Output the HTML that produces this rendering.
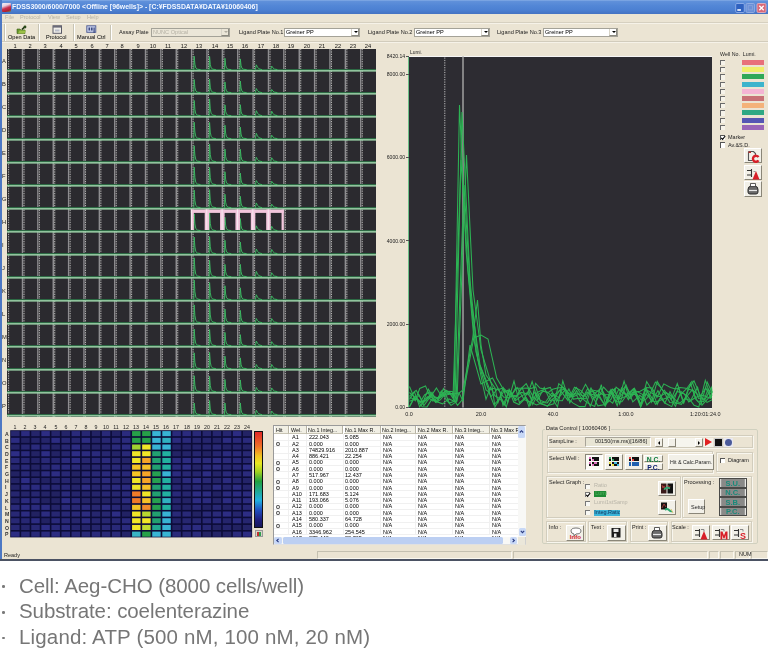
<!DOCTYPE html><html><head><meta charset="utf-8"><style>
html,body{margin:0;padding:0;}
body{width:768px;height:657px;overflow:hidden;position:relative;background:#fff;font-family:"Liberation Sans", sans-serif;}
.t{position:absolute;white-space:pre;line-height:1;font-family:"Liberation Sans", sans-serif;will-change:transform;}
div{box-sizing:border-box;}
</style></head><body>
<div style="position:absolute;left:0px;top:0px;width:768px;height:561px;background:#ebe4d3;"></div>
<div style="position:absolute;left:0px;top:0px;width:768px;height:13.5px;background:linear-gradient(#86ade6 0px,#5f90da 1.5px,#5286d6 6px,#4c80d2 10px,#4574c4 13.5px);"></div>
<div style="position:absolute;left:0px;top:0px;width:2px;height:561px;background:#4d78c4;"></div>
<div style="position:absolute;left:0px;top:559px;width:768px;height:2px;background:#4b5263;"></div>
<div style="position:absolute;left:2px;top:3px;width:8.5px;height:8.5px;background:linear-gradient(160deg,#f0f0f8 0,#e8d0e0 30%,#c83050 55%,#b02030 80%,#50a070 100%);border-radius:1px;"></div>
<div class="t" style="left:12px;top:4.2px;font-size:6.9px;color:#f4f8ff;font-weight:bold;letter-spacing:0px;">FDSS3000/6000/7000 &lt;Offline [96wells]&gt; - [C:¥FDSSDATA¥DATA¥10060406]</div>
<svg style="position:absolute;left:735px;top:2.5px" width="32" height="10"><rect x="0.7" y="0.5" width="8.6" height="9" rx="1.2" fill="#2f62c0" stroke="#9cb8ec" stroke-width="0.8"/><rect x="2.3" y="6.2" width="3.6" height="1.6" fill="#fff"/><rect x="11" y="0.5" width="8.6" height="9" rx="1.2" fill="#6a90d8" stroke="#9cb4e4" stroke-width="0.8"/><rect x="13.2" y="2.7" width="4.2" height="4.2" fill="none" stroke="#8aa6dc" stroke-width="0.8"/><rect x="22" y="0.5" width="9" height="9" rx="1.2" fill="#d86878" stroke="#f0b8c0" stroke-width="0.8"/><path d="M24.3 2.8l4.4 4.4M28.7 2.8l-4.4 4.4" stroke="#fff" stroke-width="1.3"/></svg>
<div class="t" style="left:4.7px;top:15.2px;font-size:5.6px;color:#b8b4a4;">File</div>
<div class="t" style="left:20.3px;top:15.2px;font-size:5.6px;color:#b8b4a4;">Protocol</div>
<div class="t" style="left:48px;top:15.2px;font-size:5.6px;color:#b8b4a4;">View</div>
<div class="t" style="left:66.4px;top:15.2px;font-size:5.6px;color:#b8b4a4;">Setup</div>
<div class="t" style="left:87.2px;top:15.2px;font-size:5.6px;color:#b8b4a4;">Help</div>
<div style="position:absolute;left:2px;top:22.3px;width:766px;height:1px;background:#d6d0c0;"></div>
<div style="position:absolute;left:2px;top:23.3px;width:766px;height:1px;background:#f6f2e8;"></div>
<div style="position:absolute;left:4px;top:24px;width:1px;height:17px;background:#c8c4b4;"></div>
<div style="position:absolute;left:5px;top:24px;width:1px;height:17px;background:#ffffff;"></div>
<div style="position:absolute;left:38px;top:24px;width:1px;height:17px;background:#c8c4b4;"></div>
<div style="position:absolute;left:39px;top:24px;width:1px;height:17px;background:#ffffff;"></div>
<div style="position:absolute;left:73px;top:24px;width:1px;height:17px;background:#c8c4b4;"></div>
<div style="position:absolute;left:74px;top:24px;width:1px;height:17px;background:#ffffff;"></div>
<div style="position:absolute;left:110px;top:25px;width:1px;height:15px;background:#c8c4b4;"></div>
<div style="position:absolute;left:111px;top:25px;width:1px;height:15px;background:#ffffff;"></div>
<div class="t" style="left:8.2px;top:35.0px;font-size:5.6px;color:#000;">Open Data</div>
<div class="t" style="left:46.2px;top:35.0px;font-size:5.6px;color:#000;">Protocol</div>
<div class="t" style="left:76.5px;top:35.0px;font-size:5.6px;color:#000;">Manual Ctrl</div>
<svg style="position:absolute;left:16px;top:24.5px" width="11" height="9"><path d="M1 4h3l1 1h4v3.5h-8z" fill="#6a9a30" stroke="#3a5a18" stroke-width=".6"/><path d="M2 8.5l1.5-3h6.5l-1.5 3z" fill="#9cc048"/><path d="M6 4.5l3-3" stroke="#1a3010" stroke-width="1.6"/><circle cx="9" cy="2" r="1.4" fill="#2a4a18"/></svg>
<svg style="position:absolute;left:51.5px;top:24.5px" width="11" height="9"><rect x="1" y="0.8" width="8.5" height="7.5" fill="#f0eee8" stroke="#5a5a68" stroke-width="1"/><rect x="1" y="0.8" width="8.5" height="1.8" fill="#6a6a78"/><rect x="3" y="4.5" width="4.5" height="2" fill="#b8bcc8"/></svg>
<svg style="position:absolute;left:85.5px;top:24.5px" width="11" height="9"><rect x="0.8" y="0.8" width="9" height="6.5" fill="#c8d0ec" stroke="#4a5890" stroke-width=".9"/><path d="M2.5 2.5h1.6v3h-1.6zM5 2.5h1.6v3h-1.6zM7.5 2.5h1.2v5.5h-1.2z" fill="#3a4880"/></svg>
<div style="position:absolute;left:2px;top:41.2px;width:766px;height:1px;background:#d2ccbc;"></div>
<div style="position:absolute;left:2px;top:42.2px;width:766px;height:1px;background:#f6f2e8;"></div>
<div class="t" style="left:119px;top:30.4px;font-size:5.6px;color:#222;">Assay Plate</div>
<div style="position:absolute;left:151px;top:28px;width:79px;height:9px;background:#ebe6d8;border:1px solid #a4a298;"></div>
<div class="t" style="left:153px;top:30.4px;font-size:5.6px;color:#b4b0a4;">NUNC Optical</div>
<div style="position:absolute;left:221px;top:29px;width:8px;height:7px;background:#ebe6d8;border-left:1px solid #d8d4c8;border-bottom:1px solid #8c8a80;border-right:1px solid #8c8a80;"><div style="position:absolute;left:2px;top:2.2px;width:0;height:0;border-left:2px solid transparent;border-right:2px solid transparent;border-top:2.4px solid #b0aca0"></div></div>
<div class="t" style="left:238.7px;top:30.4px;font-size:5.6px;color:#222;">Ligand Plate No.1</div>
<div style="position:absolute;left:283.7px;top:28px;width:76px;height:9px;background:#fff;border:1px solid #a4a298;"></div>
<div class="t" style="left:285.7px;top:30.4px;font-size:5.6px;color:#000;">Greiner PP</div>
<div style="position:absolute;left:350.7px;top:29px;width:8px;height:7px;background:#fff;border-left:1px solid #d8d4c8;border-bottom:1px solid #8c8a80;border-right:1px solid #8c8a80;"><div style="position:absolute;left:2px;top:2.2px;width:0;height:0;border-left:2px solid transparent;border-right:2px solid transparent;border-top:2.4px solid #000"></div></div>
<div class="t" style="left:368px;top:30.4px;font-size:5.6px;color:#222;">Ligand Plate No.2</div>
<div style="position:absolute;left:413.7px;top:28px;width:76px;height:9px;background:#fff;border:1px solid #a4a298;"></div>
<div class="t" style="left:415.7px;top:30.4px;font-size:5.6px;color:#000;">Greiner PP</div>
<div style="position:absolute;left:480.7px;top:29px;width:8px;height:7px;background:#fff;border-left:1px solid #d8d4c8;border-bottom:1px solid #8c8a80;border-right:1px solid #8c8a80;"><div style="position:absolute;left:2px;top:2.2px;width:0;height:0;border-left:2px solid transparent;border-right:2px solid transparent;border-top:2.4px solid #000"></div></div>
<div class="t" style="left:497.3px;top:30.4px;font-size:5.6px;color:#222;">Ligand Plate No.3</div>
<div style="position:absolute;left:542.8px;top:28px;width:75px;height:9px;background:#fff;border:1px solid #a4a298;"></div>
<div class="t" style="left:544.8px;top:30.4px;font-size:5.6px;color:#000;">Greiner PP</div>
<div style="position:absolute;left:608.8px;top:29px;width:8px;height:7px;background:#fff;border-left:1px solid #d8d4c8;border-bottom:1px solid #8c8a80;border-right:1px solid #8c8a80;"><div style="position:absolute;left:2px;top:2.2px;width:0;height:0;border-left:2px solid transparent;border-right:2px solid transparent;border-top:2.4px solid #000"></div></div>
<div class="t" style="left:8.6875px;top:43.6px;font-size:5.7px;color:#111;"><span style="display:inline-block;width:12px;text-align:center">1</span></div>
<div class="t" style="left:24.0625px;top:43.6px;font-size:5.7px;color:#111;"><span style="display:inline-block;width:12px;text-align:center">2</span></div>
<div class="t" style="left:39.4375px;top:43.6px;font-size:5.7px;color:#111;"><span style="display:inline-block;width:12px;text-align:center">3</span></div>
<div class="t" style="left:54.8125px;top:43.6px;font-size:5.7px;color:#111;"><span style="display:inline-block;width:12px;text-align:center">4</span></div>
<div class="t" style="left:70.1875px;top:43.6px;font-size:5.7px;color:#111;"><span style="display:inline-block;width:12px;text-align:center">5</span></div>
<div class="t" style="left:85.5625px;top:43.6px;font-size:5.7px;color:#111;"><span style="display:inline-block;width:12px;text-align:center">6</span></div>
<div class="t" style="left:100.9375px;top:43.6px;font-size:5.7px;color:#111;"><span style="display:inline-block;width:12px;text-align:center">7</span></div>
<div class="t" style="left:116.3125px;top:43.6px;font-size:5.7px;color:#111;"><span style="display:inline-block;width:12px;text-align:center">8</span></div>
<div class="t" style="left:131.6875px;top:43.6px;font-size:5.7px;color:#111;"><span style="display:inline-block;width:12px;text-align:center">9</span></div>
<div class="t" style="left:147.0625px;top:43.6px;font-size:5.7px;color:#111;"><span style="display:inline-block;width:12px;text-align:center">10</span></div>
<div class="t" style="left:162.4375px;top:43.6px;font-size:5.7px;color:#111;"><span style="display:inline-block;width:12px;text-align:center">11</span></div>
<div class="t" style="left:177.8125px;top:43.6px;font-size:5.7px;color:#111;"><span style="display:inline-block;width:12px;text-align:center">12</span></div>
<div class="t" style="left:193.1875px;top:43.6px;font-size:5.7px;color:#111;"><span style="display:inline-block;width:12px;text-align:center">13</span></div>
<div class="t" style="left:208.5625px;top:43.6px;font-size:5.7px;color:#111;"><span style="display:inline-block;width:12px;text-align:center">14</span></div>
<div class="t" style="left:223.9375px;top:43.6px;font-size:5.7px;color:#111;"><span style="display:inline-block;width:12px;text-align:center">15</span></div>
<div class="t" style="left:239.3125px;top:43.6px;font-size:5.7px;color:#111;"><span style="display:inline-block;width:12px;text-align:center">16</span></div>
<div class="t" style="left:254.6875px;top:43.6px;font-size:5.7px;color:#111;"><span style="display:inline-block;width:12px;text-align:center">17</span></div>
<div class="t" style="left:270.0625px;top:43.6px;font-size:5.7px;color:#111;"><span style="display:inline-block;width:12px;text-align:center">18</span></div>
<div class="t" style="left:285.4375px;top:43.6px;font-size:5.7px;color:#111;"><span style="display:inline-block;width:12px;text-align:center">19</span></div>
<div class="t" style="left:300.8125px;top:43.6px;font-size:5.7px;color:#111;"><span style="display:inline-block;width:12px;text-align:center">20</span></div>
<div class="t" style="left:316.1875px;top:43.6px;font-size:5.7px;color:#111;"><span style="display:inline-block;width:12px;text-align:center">21</span></div>
<div class="t" style="left:331.5625px;top:43.6px;font-size:5.7px;color:#111;"><span style="display:inline-block;width:12px;text-align:center">22</span></div>
<div class="t" style="left:346.9375px;top:43.6px;font-size:5.7px;color:#111;"><span style="display:inline-block;width:12px;text-align:center">23</span></div>
<div class="t" style="left:362.3125px;top:43.6px;font-size:5.7px;color:#111;"><span style="display:inline-block;width:12px;text-align:center">24</span></div>
<div class="t" style="left:2.4px;top:59.0px;font-size:5.8px;color:#222;">A</div>
<div class="t" style="left:2.4px;top:82.0px;font-size:5.8px;color:#222;">B</div>
<div class="t" style="left:2.4px;top:105.0px;font-size:5.8px;color:#222;">C</div>
<div class="t" style="left:2.4px;top:128.0px;font-size:5.8px;color:#222;">D</div>
<div class="t" style="left:2.4px;top:151.0px;font-size:5.8px;color:#222;">E</div>
<div class="t" style="left:2.4px;top:174.0px;font-size:5.8px;color:#222;">F</div>
<div class="t" style="left:2.4px;top:197.0px;font-size:5.8px;color:#222;">G</div>
<div class="t" style="left:2.4px;top:220.0px;font-size:5.8px;color:#222;">H</div>
<div class="t" style="left:2.4px;top:243.0px;font-size:5.8px;color:#222;">I</div>
<div class="t" style="left:2.4px;top:266.0px;font-size:5.8px;color:#222;">J</div>
<div class="t" style="left:2.4px;top:289.0px;font-size:5.8px;color:#222;">K</div>
<div class="t" style="left:2.4px;top:312.0px;font-size:5.8px;color:#222;">L</div>
<div class="t" style="left:2.4px;top:335.0px;font-size:5.8px;color:#222;">M</div>
<div class="t" style="left:2.4px;top:358.0px;font-size:5.8px;color:#222;">N</div>
<div class="t" style="left:2.4px;top:381.0px;font-size:5.8px;color:#222;">O</div>
<div class="t" style="left:2.4px;top:404.0px;font-size:5.8px;color:#222;">P</div>
<div style="position:absolute;left:7.0px;top:49.0px;width:369.0px;height:368.0px;background:#2b2a2f;"></div>
<svg style="position:absolute;left:0;top:0" width="768" height="657"><rect x="21.77" y="49.0" width="1.5" height="368.0" fill="#8e8d90"/><rect x="37.15" y="49.0" width="1.5" height="368.0" fill="#8e8d90"/><rect x="52.52" y="49.0" width="1.5" height="368.0" fill="#8e8d90"/><rect x="67.90" y="49.0" width="1.5" height="368.0" fill="#8e8d90"/><rect x="83.28" y="49.0" width="1.5" height="368.0" fill="#8e8d90"/><rect x="98.65" y="49.0" width="1.5" height="368.0" fill="#8e8d90"/><rect x="114.03" y="49.0" width="1.5" height="368.0" fill="#8e8d90"/><rect x="129.40" y="49.0" width="1.5" height="368.0" fill="#8e8d90"/><rect x="144.78" y="49.0" width="1.5" height="368.0" fill="#8e8d90"/><rect x="160.15" y="49.0" width="1.5" height="368.0" fill="#8e8d90"/><rect x="175.53" y="49.0" width="1.5" height="368.0" fill="#8e8d90"/><rect x="190.90" y="49.0" width="1.5" height="368.0" fill="#8e8d90"/><rect x="206.28" y="49.0" width="1.5" height="368.0" fill="#8e8d90"/><rect x="221.65" y="49.0" width="1.5" height="368.0" fill="#8e8d90"/><rect x="237.03" y="49.0" width="1.5" height="368.0" fill="#8e8d90"/><rect x="252.40" y="49.0" width="1.5" height="368.0" fill="#8e8d90"/><rect x="267.77" y="49.0" width="1.5" height="368.0" fill="#8e8d90"/><rect x="283.15" y="49.0" width="1.5" height="368.0" fill="#8e8d90"/><rect x="298.52" y="49.0" width="1.5" height="368.0" fill="#8e8d90"/><rect x="313.90" y="49.0" width="1.5" height="368.0" fill="#8e8d90"/><rect x="329.27" y="49.0" width="1.5" height="368.0" fill="#8e8d90"/><rect x="344.65" y="49.0" width="1.5" height="368.0" fill="#8e8d90"/><rect x="360.02" y="49.0" width="1.5" height="368.0" fill="#8e8d90"/><rect x="7.90" y="49.0" width="1.4" height="368.0" fill="#3a393c"/><line x1="8.60" y1="49.0" x2="8.60" y2="417.0" stroke="#b8b8b8" stroke-width="1.0" stroke-dasharray="1.2 1.2"/><rect x="23.27" y="49.0" width="1.4" height="368.0" fill="#3a393c"/><line x1="23.98" y1="49.0" x2="23.98" y2="417.0" stroke="#b8b8b8" stroke-width="1.0" stroke-dasharray="1.2 1.2"/><rect x="38.65" y="49.0" width="1.4" height="368.0" fill="#3a393c"/><line x1="39.35" y1="49.0" x2="39.35" y2="417.0" stroke="#b8b8b8" stroke-width="1.0" stroke-dasharray="1.2 1.2"/><rect x="54.02" y="49.0" width="1.4" height="368.0" fill="#3a393c"/><line x1="54.73" y1="49.0" x2="54.73" y2="417.0" stroke="#b8b8b8" stroke-width="1.0" stroke-dasharray="1.2 1.2"/><rect x="69.40" y="49.0" width="1.4" height="368.0" fill="#3a393c"/><line x1="70.10" y1="49.0" x2="70.10" y2="417.0" stroke="#b8b8b8" stroke-width="1.0" stroke-dasharray="1.2 1.2"/><rect x="84.78" y="49.0" width="1.4" height="368.0" fill="#3a393c"/><line x1="85.47" y1="49.0" x2="85.47" y2="417.0" stroke="#b8b8b8" stroke-width="1.0" stroke-dasharray="1.2 1.2"/><rect x="100.15" y="49.0" width="1.4" height="368.0" fill="#3a393c"/><line x1="100.85" y1="49.0" x2="100.85" y2="417.0" stroke="#b8b8b8" stroke-width="1.0" stroke-dasharray="1.2 1.2"/><rect x="115.53" y="49.0" width="1.4" height="368.0" fill="#3a393c"/><line x1="116.22" y1="49.0" x2="116.22" y2="417.0" stroke="#b8b8b8" stroke-width="1.0" stroke-dasharray="1.2 1.2"/><rect x="130.90" y="49.0" width="1.4" height="368.0" fill="#3a393c"/><line x1="131.60" y1="49.0" x2="131.60" y2="417.0" stroke="#b8b8b8" stroke-width="1.0" stroke-dasharray="1.2 1.2"/><rect x="146.28" y="49.0" width="1.4" height="368.0" fill="#3a393c"/><line x1="146.97" y1="49.0" x2="146.97" y2="417.0" stroke="#b8b8b8" stroke-width="1.0" stroke-dasharray="1.2 1.2"/><rect x="161.65" y="49.0" width="1.4" height="368.0" fill="#3a393c"/><line x1="162.35" y1="49.0" x2="162.35" y2="417.0" stroke="#b8b8b8" stroke-width="1.0" stroke-dasharray="1.2 1.2"/><rect x="177.03" y="49.0" width="1.4" height="368.0" fill="#3a393c"/><line x1="177.72" y1="49.0" x2="177.72" y2="417.0" stroke="#b8b8b8" stroke-width="1.0" stroke-dasharray="1.2 1.2"/><rect x="192.40" y="49.0" width="1.4" height="368.0" fill="#3a393c"/><line x1="193.10" y1="49.0" x2="193.10" y2="417.0" stroke="#b8b8b8" stroke-width="1.0" stroke-dasharray="1.2 1.2"/><rect x="207.78" y="49.0" width="1.4" height="368.0" fill="#3a393c"/><line x1="208.47" y1="49.0" x2="208.47" y2="417.0" stroke="#b8b8b8" stroke-width="1.0" stroke-dasharray="1.2 1.2"/><rect x="223.15" y="49.0" width="1.4" height="368.0" fill="#3a393c"/><line x1="223.85" y1="49.0" x2="223.85" y2="417.0" stroke="#b8b8b8" stroke-width="1.0" stroke-dasharray="1.2 1.2"/><rect x="238.53" y="49.0" width="1.4" height="368.0" fill="#3a393c"/><line x1="239.22" y1="49.0" x2="239.22" y2="417.0" stroke="#b8b8b8" stroke-width="1.0" stroke-dasharray="1.2 1.2"/><rect x="253.90" y="49.0" width="1.4" height="368.0" fill="#3a393c"/><line x1="254.60" y1="49.0" x2="254.60" y2="417.0" stroke="#b8b8b8" stroke-width="1.0" stroke-dasharray="1.2 1.2"/><rect x="269.27" y="49.0" width="1.4" height="368.0" fill="#3a393c"/><line x1="269.98" y1="49.0" x2="269.98" y2="417.0" stroke="#b8b8b8" stroke-width="1.0" stroke-dasharray="1.2 1.2"/><rect x="284.65" y="49.0" width="1.4" height="368.0" fill="#3a393c"/><line x1="285.35" y1="49.0" x2="285.35" y2="417.0" stroke="#b8b8b8" stroke-width="1.0" stroke-dasharray="1.2 1.2"/><rect x="300.02" y="49.0" width="1.4" height="368.0" fill="#3a393c"/><line x1="300.73" y1="49.0" x2="300.73" y2="417.0" stroke="#b8b8b8" stroke-width="1.0" stroke-dasharray="1.2 1.2"/><rect x="315.40" y="49.0" width="1.4" height="368.0" fill="#3a393c"/><line x1="316.10" y1="49.0" x2="316.10" y2="417.0" stroke="#b8b8b8" stroke-width="1.0" stroke-dasharray="1.2 1.2"/><rect x="330.77" y="49.0" width="1.4" height="368.0" fill="#3a393c"/><line x1="331.48" y1="49.0" x2="331.48" y2="417.0" stroke="#b8b8b8" stroke-width="1.0" stroke-dasharray="1.2 1.2"/><rect x="346.15" y="49.0" width="1.4" height="368.0" fill="#3a393c"/><line x1="346.85" y1="49.0" x2="346.85" y2="417.0" stroke="#b8b8b8" stroke-width="1.0" stroke-dasharray="1.2 1.2"/><rect x="361.52" y="49.0" width="1.4" height="368.0" fill="#3a393c"/><line x1="362.23" y1="49.0" x2="362.23" y2="417.0" stroke="#b8b8b8" stroke-width="1.0" stroke-dasharray="1.2 1.2"/><rect x="7.0" y="69.00" width="369.0" height="1.0" fill="#2d6a44"/><rect x="7.0" y="70.10" width="369.0" height="1.5" fill="#9cd4aa"/><rect x="7.0" y="92.00" width="369.0" height="1.0" fill="#2d6a44"/><rect x="7.0" y="93.10" width="369.0" height="1.5" fill="#9cd4aa"/><rect x="7.0" y="115.00" width="369.0" height="1.0" fill="#2d6a44"/><rect x="7.0" y="116.10" width="369.0" height="1.5" fill="#9cd4aa"/><rect x="7.0" y="138.00" width="369.0" height="1.0" fill="#2d6a44"/><rect x="7.0" y="139.10" width="369.0" height="1.5" fill="#9cd4aa"/><rect x="7.0" y="161.00" width="369.0" height="1.0" fill="#2d6a44"/><rect x="7.0" y="162.10" width="369.0" height="1.5" fill="#9cd4aa"/><rect x="7.0" y="184.00" width="369.0" height="1.0" fill="#2d6a44"/><rect x="7.0" y="185.10" width="369.0" height="1.5" fill="#9cd4aa"/><rect x="7.0" y="207.00" width="369.0" height="1.0" fill="#2d6a44"/><rect x="7.0" y="208.10" width="369.0" height="1.5" fill="#9cd4aa"/><rect x="7.0" y="230.00" width="369.0" height="1.0" fill="#2d6a44"/><rect x="7.0" y="231.10" width="369.0" height="1.5" fill="#9cd4aa"/><rect x="7.0" y="253.00" width="369.0" height="1.0" fill="#2d6a44"/><rect x="7.0" y="254.10" width="369.0" height="1.5" fill="#9cd4aa"/><rect x="7.0" y="276.00" width="369.0" height="1.0" fill="#2d6a44"/><rect x="7.0" y="277.10" width="369.0" height="1.5" fill="#9cd4aa"/><rect x="7.0" y="299.00" width="369.0" height="1.0" fill="#2d6a44"/><rect x="7.0" y="300.10" width="369.0" height="1.5" fill="#9cd4aa"/><rect x="7.0" y="322.00" width="369.0" height="1.0" fill="#2d6a44"/><rect x="7.0" y="323.10" width="369.0" height="1.5" fill="#9cd4aa"/><rect x="7.0" y="345.00" width="369.0" height="1.0" fill="#2d6a44"/><rect x="7.0" y="346.10" width="369.0" height="1.5" fill="#9cd4aa"/><rect x="7.0" y="368.00" width="369.0" height="1.0" fill="#2d6a44"/><rect x="7.0" y="369.10" width="369.0" height="1.5" fill="#9cd4aa"/><rect x="7.0" y="391.00" width="369.0" height="1.0" fill="#2d6a44"/><rect x="7.0" y="392.10" width="369.0" height="1.5" fill="#9cd4aa"/><rect x="7.0" y="414.00" width="369.0" height="1.0" fill="#2d6a44"/><rect x="7.0" y="415.10" width="369.0" height="1.5" fill="#9cd4aa"/><polyline points="193.80,69.60 194.20,56.21 194.90,64.24 195.80,67.99 197.50,69.20 200.50,69.60" fill="none" stroke="#3cb862" stroke-width="0.95" stroke-linejoin="round"/><polyline points="209.18,69.60 209.57,56.42 210.28,64.33 211.18,68.02 212.88,69.20 215.88,69.60" fill="none" stroke="#3cb862" stroke-width="0.95" stroke-linejoin="round"/><polyline points="224.55,69.60 224.95,58.22 225.65,65.05 226.55,68.23 228.25,69.26 231.25,69.60" fill="none" stroke="#3cb862" stroke-width="0.95" stroke-linejoin="round"/><polyline points="239.93,69.60 240.32,58.91 241.03,65.33 241.93,68.32 243.62,69.28 246.62,69.60" fill="none" stroke="#3cb862" stroke-width="0.95" stroke-linejoin="round"/><polyline points="255.40,69.60 256.30,64.80 257.50,67.20 259.00,68.88 262.00,69.60" fill="none" stroke="#3cb862" stroke-width="0.95" stroke-linejoin="round"/><polyline points="270.77,69.60 271.68,66.05 272.88,67.83 274.38,69.07 277.38,69.60" fill="none" stroke="#3cb862" stroke-width="0.95" stroke-linejoin="round"/><polyline points="193.80,92.60 194.20,79.53 194.90,87.37 195.80,91.03 197.50,92.21 200.50,92.60" fill="none" stroke="#3cb862" stroke-width="0.95" stroke-linejoin="round"/><polyline points="209.18,92.60 209.57,78.99 210.28,87.16 211.18,90.97 212.88,92.19 215.88,92.60" fill="none" stroke="#3cb862" stroke-width="0.95" stroke-linejoin="round"/><polyline points="224.55,92.60 224.95,81.96 225.65,88.34 226.55,91.32 228.25,92.28 231.25,92.60" fill="none" stroke="#3cb862" stroke-width="0.95" stroke-linejoin="round"/><polyline points="239.93,92.60 240.32,81.00 241.03,87.96 241.93,91.21 243.62,92.25 246.62,92.60" fill="none" stroke="#3cb862" stroke-width="0.95" stroke-linejoin="round"/><polyline points="255.40,92.60 256.30,88.50 257.50,90.55 259.00,91.98 262.00,92.60" fill="none" stroke="#3cb862" stroke-width="0.95" stroke-linejoin="round"/><polyline points="270.77,92.60 271.68,89.46 272.88,91.03 274.38,92.13 277.38,92.60" fill="none" stroke="#3cb862" stroke-width="0.95" stroke-linejoin="round"/><polyline points="193.80,115.60 194.20,100.49 194.90,109.56 195.80,113.79 197.50,115.15 200.50,115.60" fill="none" stroke="#3cb862" stroke-width="0.95" stroke-linejoin="round"/><polyline points="209.18,115.60 209.57,98.89 210.28,108.92 211.18,113.59 212.88,115.10 215.88,115.60" fill="none" stroke="#3cb862" stroke-width="0.95" stroke-linejoin="round"/><polyline points="224.55,115.60 224.95,104.85 225.65,111.30 226.55,114.31 228.25,115.28 231.25,115.60" fill="none" stroke="#3cb862" stroke-width="0.95" stroke-linejoin="round"/><polyline points="239.93,115.60 240.32,104.73 241.03,111.25 241.93,114.30 243.62,115.27 246.62,115.60" fill="none" stroke="#3cb862" stroke-width="0.95" stroke-linejoin="round"/><polyline points="255.40,115.60 256.30,110.66 257.50,113.13 259.00,114.86 262.00,115.60" fill="none" stroke="#3cb862" stroke-width="0.95" stroke-linejoin="round"/><polyline points="270.77,115.60 271.68,111.18 272.88,113.39 274.38,114.94 277.38,115.60" fill="none" stroke="#3cb862" stroke-width="0.95" stroke-linejoin="round"/><polyline points="193.80,138.60 194.20,122.19 194.90,132.03 195.80,136.63 197.50,138.11 200.50,138.60" fill="none" stroke="#3cb862" stroke-width="0.95" stroke-linejoin="round"/><polyline points="209.18,138.60 209.57,122.40 210.28,132.12 211.18,136.66 212.88,138.11 215.88,138.60" fill="none" stroke="#3cb862" stroke-width="0.95" stroke-linejoin="round"/><polyline points="224.55,138.60 224.95,125.23 225.65,133.25 226.55,137.00 228.25,138.20 231.25,138.60" fill="none" stroke="#3cb862" stroke-width="0.95" stroke-linejoin="round"/><polyline points="239.93,138.60 240.32,127.14 241.03,134.02 241.93,137.23 243.62,138.26 246.62,138.60" fill="none" stroke="#3cb862" stroke-width="0.95" stroke-linejoin="round"/><polyline points="255.40,138.60 256.30,133.31 257.50,135.96 259.00,137.81 262.00,138.60" fill="none" stroke="#3cb862" stroke-width="0.95" stroke-linejoin="round"/><polyline points="270.77,138.60 271.68,135.17 272.88,136.88 274.38,138.08 277.38,138.60" fill="none" stroke="#3cb862" stroke-width="0.95" stroke-linejoin="round"/><polyline points="193.80,161.60 194.20,145.71 194.90,155.24 195.80,159.69 197.50,161.12 200.50,161.60" fill="none" stroke="#3cb862" stroke-width="0.95" stroke-linejoin="round"/><polyline points="209.18,161.60 209.57,143.98 210.28,154.55 211.18,159.49 212.88,161.07 215.88,161.60" fill="none" stroke="#3cb862" stroke-width="0.95" stroke-linejoin="round"/><polyline points="224.55,161.60 224.95,149.03 225.65,156.57 226.55,160.09 228.25,161.22 231.25,161.60" fill="none" stroke="#3cb862" stroke-width="0.95" stroke-linejoin="round"/><polyline points="239.93,161.60 240.32,149.22 241.03,156.65 241.93,160.11 243.62,161.23 246.62,161.60" fill="none" stroke="#3cb862" stroke-width="0.95" stroke-linejoin="round"/><polyline points="255.40,161.60 256.30,157.33 257.50,159.46 259.00,160.96 262.00,161.60" fill="none" stroke="#3cb862" stroke-width="0.95" stroke-linejoin="round"/><polyline points="270.77,161.60 271.68,157.73 272.88,159.66 274.38,161.02 277.38,161.60" fill="none" stroke="#3cb862" stroke-width="0.95" stroke-linejoin="round"/><polyline points="193.80,184.60 194.20,167.15 194.90,177.62 195.80,182.51 197.50,184.08 200.50,184.60" fill="none" stroke="#3cb862" stroke-width="0.95" stroke-linejoin="round"/><polyline points="209.18,184.60 209.57,167.47 210.28,177.75 211.18,182.54 212.88,184.09 215.88,184.60" fill="none" stroke="#3cb862" stroke-width="0.95" stroke-linejoin="round"/><polyline points="224.55,184.60 224.95,171.74 225.65,179.46 226.55,183.06 228.25,184.21 231.25,184.60" fill="none" stroke="#3cb862" stroke-width="0.95" stroke-linejoin="round"/><polyline points="239.93,184.60 240.32,173.12 241.03,180.01 241.93,183.22 243.62,184.26 246.62,184.60" fill="none" stroke="#3cb862" stroke-width="0.95" stroke-linejoin="round"/><polyline points="255.40,184.60 256.30,180.51 257.50,182.56 259.00,183.99 262.00,184.60" fill="none" stroke="#3cb862" stroke-width="0.95" stroke-linejoin="round"/><polyline points="270.77,184.60 271.68,181.29 272.88,182.95 274.38,184.10 277.38,184.60" fill="none" stroke="#3cb862" stroke-width="0.95" stroke-linejoin="round"/><polyline points="193.80,207.60 194.20,190.10 194.90,200.60 195.80,205.50 197.50,207.08 200.50,207.60" fill="none" stroke="#3cb862" stroke-width="0.95" stroke-linejoin="round"/><polyline points="209.18,207.60 209.57,189.61 210.28,200.40 211.18,205.44 212.88,207.06 215.88,207.60" fill="none" stroke="#3cb862" stroke-width="0.95" stroke-linejoin="round"/><polyline points="224.55,207.60 224.95,194.22 225.65,202.25 226.55,205.99 228.25,207.20 231.25,207.60" fill="none" stroke="#3cb862" stroke-width="0.95" stroke-linejoin="round"/><polyline points="239.93,207.60 240.32,196.30 241.03,203.08 241.93,206.24 243.62,207.26 246.62,207.60" fill="none" stroke="#3cb862" stroke-width="0.95" stroke-linejoin="round"/><polyline points="255.40,207.60 256.30,202.92 257.50,205.26 259.00,206.90 262.00,207.60" fill="none" stroke="#3cb862" stroke-width="0.95" stroke-linejoin="round"/><polyline points="270.77,207.60 271.68,204.15 272.88,205.88 274.38,207.08 277.38,207.60" fill="none" stroke="#3cb862" stroke-width="0.95" stroke-linejoin="round"/><polyline points="193.80,230.60 194.20,213.93 194.90,223.93 195.80,228.60 197.50,230.10 200.50,230.60" fill="none" stroke="#3cb862" stroke-width="0.95" stroke-linejoin="round"/><polyline points="209.18,230.60 209.57,212.28 210.28,223.27 211.18,228.40 212.88,230.05 215.88,230.60" fill="none" stroke="#3cb862" stroke-width="0.95" stroke-linejoin="round"/><polyline points="224.55,230.60 224.95,217.31 225.65,225.28 226.55,229.00 228.25,230.20 231.25,230.60" fill="none" stroke="#3cb862" stroke-width="0.95" stroke-linejoin="round"/><polyline points="239.93,230.60 240.32,218.51 241.03,225.76 241.93,229.15 243.62,230.24 246.62,230.60" fill="none" stroke="#3cb862" stroke-width="0.95" stroke-linejoin="round"/><polyline points="255.40,230.60 256.30,225.81 257.50,228.21 259.00,229.88 262.00,230.60" fill="none" stroke="#3cb862" stroke-width="0.95" stroke-linejoin="round"/><polyline points="270.77,230.60 271.68,226.29 272.88,228.44 274.38,229.95 277.38,230.60" fill="none" stroke="#3cb862" stroke-width="0.95" stroke-linejoin="round"/><polyline points="193.80,253.60 194.20,237.00 194.90,246.96 195.80,251.61 197.50,253.10 200.50,253.60" fill="none" stroke="#3cb862" stroke-width="0.95" stroke-linejoin="round"/><polyline points="209.18,253.60 209.57,236.57 210.28,246.79 211.18,251.56 212.88,253.09 215.88,253.60" fill="none" stroke="#3cb862" stroke-width="0.95" stroke-linejoin="round"/><polyline points="224.55,253.60 224.95,240.22 225.65,248.25 226.55,251.99 228.25,253.20 231.25,253.60" fill="none" stroke="#3cb862" stroke-width="0.95" stroke-linejoin="round"/><polyline points="239.93,253.60 240.32,242.06 241.03,248.98 241.93,252.21 243.62,253.25 246.62,253.60" fill="none" stroke="#3cb862" stroke-width="0.95" stroke-linejoin="round"/><polyline points="255.40,253.60 256.30,248.97 257.50,251.29 259.00,252.91 262.00,253.60" fill="none" stroke="#3cb862" stroke-width="0.95" stroke-linejoin="round"/><polyline points="270.77,253.60 271.68,249.46 272.88,251.53 274.38,252.98 277.38,253.60" fill="none" stroke="#3cb862" stroke-width="0.95" stroke-linejoin="round"/><polyline points="193.80,276.60 194.20,257.82 194.90,269.09 195.80,274.35 197.50,276.04 200.50,276.60" fill="none" stroke="#3cb862" stroke-width="0.95" stroke-linejoin="round"/><polyline points="209.18,276.60 209.57,260.29 210.28,270.08 211.18,274.64 212.88,276.11 215.88,276.60" fill="none" stroke="#3cb862" stroke-width="0.95" stroke-linejoin="round"/><polyline points="224.55,276.60 224.95,264.35 225.65,271.70 226.55,275.13 228.25,276.23 231.25,276.60" fill="none" stroke="#3cb862" stroke-width="0.95" stroke-linejoin="round"/><polyline points="239.93,276.60 240.32,264.40 241.03,271.72 241.93,275.14 243.62,276.23 246.62,276.60" fill="none" stroke="#3cb862" stroke-width="0.95" stroke-linejoin="round"/><polyline points="255.40,276.60 256.30,271.45 257.50,274.03 259.00,275.83 262.00,276.60" fill="none" stroke="#3cb862" stroke-width="0.95" stroke-linejoin="round"/><polyline points="270.77,276.60 271.68,272.74 272.88,274.67 274.38,276.02 277.38,276.60" fill="none" stroke="#3cb862" stroke-width="0.95" stroke-linejoin="round"/><polyline points="193.80,299.60 194.20,280.10 194.90,291.80 195.80,297.26 197.50,299.02 200.50,299.60" fill="none" stroke="#3cb862" stroke-width="0.95" stroke-linejoin="round"/><polyline points="209.18,299.60 209.57,282.54 210.28,292.78 211.18,297.55 212.88,299.09 215.88,299.60" fill="none" stroke="#3cb862" stroke-width="0.95" stroke-linejoin="round"/><polyline points="224.55,299.60 224.95,285.77 225.65,294.07 226.55,297.94 228.25,299.18 231.25,299.60" fill="none" stroke="#3cb862" stroke-width="0.95" stroke-linejoin="round"/><polyline points="239.93,299.60 240.32,287.81 241.03,294.88 241.93,298.18 243.62,299.25 246.62,299.60" fill="none" stroke="#3cb862" stroke-width="0.95" stroke-linejoin="round"/><polyline points="255.40,299.60 256.30,294.73 257.50,297.17 259.00,298.87 262.00,299.60" fill="none" stroke="#3cb862" stroke-width="0.95" stroke-linejoin="round"/><polyline points="270.77,299.60 271.68,295.92 272.88,297.76 274.38,299.05 277.38,299.60" fill="none" stroke="#3cb862" stroke-width="0.95" stroke-linejoin="round"/><polyline points="193.80,322.60 194.20,304.91 194.90,315.52 195.80,320.48 197.50,322.07 200.50,322.60" fill="none" stroke="#3cb862" stroke-width="0.95" stroke-linejoin="round"/><polyline points="209.18,322.60 209.57,303.35 210.28,314.90 211.18,320.29 212.88,322.02 215.88,322.60" fill="none" stroke="#3cb862" stroke-width="0.95" stroke-linejoin="round"/><polyline points="224.55,322.60 224.95,309.03 225.65,317.17 226.55,320.97 228.25,322.19 231.25,322.60" fill="none" stroke="#3cb862" stroke-width="0.95" stroke-linejoin="round"/><polyline points="239.93,322.60 240.32,310.40 241.03,317.72 241.93,321.14 243.62,322.23 246.62,322.60" fill="none" stroke="#3cb862" stroke-width="0.95" stroke-linejoin="round"/><polyline points="255.40,322.60 256.30,318.51 257.50,320.55 259.00,321.99 262.00,322.60" fill="none" stroke="#3cb862" stroke-width="0.95" stroke-linejoin="round"/><polyline points="270.77,322.60 271.68,318.55 272.88,320.57 274.38,321.99 277.38,322.60" fill="none" stroke="#3cb862" stroke-width="0.95" stroke-linejoin="round"/><polyline points="193.80,345.60 194.20,329.10 194.90,339.00 195.80,343.62 197.50,345.11 200.50,345.60" fill="none" stroke="#3cb862" stroke-width="0.95" stroke-linejoin="round"/><polyline points="209.18,345.60 209.57,329.49 210.28,339.16 211.18,343.67 212.88,345.12 215.88,345.60" fill="none" stroke="#3cb862" stroke-width="0.95" stroke-linejoin="round"/><polyline points="224.55,345.60 224.95,332.41 225.65,340.33 226.55,344.02 228.25,345.20 231.25,345.60" fill="none" stroke="#3cb862" stroke-width="0.95" stroke-linejoin="round"/><polyline points="239.93,345.60 240.32,334.66 241.03,341.22 241.93,344.29 243.62,345.27 246.62,345.60" fill="none" stroke="#3cb862" stroke-width="0.95" stroke-linejoin="round"/><polyline points="255.40,345.60 256.30,341.02 257.50,343.31 259.00,344.91 262.00,345.60" fill="none" stroke="#3cb862" stroke-width="0.95" stroke-linejoin="round"/><polyline points="270.77,345.60 271.68,341.60 272.88,343.60 274.38,345.00 277.38,345.60" fill="none" stroke="#3cb862" stroke-width="0.95" stroke-linejoin="round"/><polyline points="193.80,368.60 194.20,352.85 194.90,362.30 195.80,366.71 197.50,368.13 200.50,368.60" fill="none" stroke="#3cb862" stroke-width="0.95" stroke-linejoin="round"/><polyline points="209.18,368.60 209.57,352.33 210.28,362.09 211.18,366.65 212.88,368.11 215.88,368.60" fill="none" stroke="#3cb862" stroke-width="0.95" stroke-linejoin="round"/><polyline points="224.55,368.60 224.95,356.20 225.65,363.64 226.55,367.11 228.25,368.23 231.25,368.60" fill="none" stroke="#3cb862" stroke-width="0.95" stroke-linejoin="round"/><polyline points="239.93,368.60 240.32,357.86 241.03,364.30 241.93,367.31 243.62,368.28 246.62,368.60" fill="none" stroke="#3cb862" stroke-width="0.95" stroke-linejoin="round"/><polyline points="255.40,368.60 256.30,364.51 257.50,366.56 259.00,367.99 262.00,368.60" fill="none" stroke="#3cb862" stroke-width="0.95" stroke-linejoin="round"/><polyline points="270.77,368.60 271.68,364.45 272.88,366.52 274.38,367.98 277.38,368.60" fill="none" stroke="#3cb862" stroke-width="0.95" stroke-linejoin="round"/><polyline points="193.80,391.60 194.20,375.72 194.90,385.25 195.80,389.69 197.50,391.12 200.50,391.60" fill="none" stroke="#3cb862" stroke-width="0.95" stroke-linejoin="round"/><polyline points="209.18,391.60 209.57,376.22 210.28,385.45 211.18,389.75 212.88,391.14 215.88,391.60" fill="none" stroke="#3cb862" stroke-width="0.95" stroke-linejoin="round"/><polyline points="224.55,391.60 224.95,379.41 225.65,386.72 226.55,390.14 228.25,391.23 231.25,391.60" fill="none" stroke="#3cb862" stroke-width="0.95" stroke-linejoin="round"/><polyline points="239.93,391.60 240.32,379.95 241.03,386.94 241.93,390.20 243.62,391.25 246.62,391.60" fill="none" stroke="#3cb862" stroke-width="0.95" stroke-linejoin="round"/><polyline points="255.40,391.60 256.30,387.48 257.50,389.54 259.00,390.98 262.00,391.60" fill="none" stroke="#3cb862" stroke-width="0.95" stroke-linejoin="round"/><polyline points="270.77,391.60 271.68,387.93 272.88,389.76 274.38,391.05 277.38,391.60" fill="none" stroke="#3cb862" stroke-width="0.95" stroke-linejoin="round"/><polyline points="193.80,414.60 194.20,403.02 194.90,409.97 195.80,413.21 197.50,414.25 200.50,414.60" fill="none" stroke="#3cb862" stroke-width="0.95" stroke-linejoin="round"/><polyline points="209.18,414.60 209.57,400.54 210.28,408.98 211.18,412.91 212.88,414.18 215.88,414.60" fill="none" stroke="#3cb862" stroke-width="0.95" stroke-linejoin="round"/><polyline points="224.55,414.60 224.95,403.02 225.65,409.97 226.55,413.21 228.25,414.25 231.25,414.60" fill="none" stroke="#3cb862" stroke-width="0.95" stroke-linejoin="round"/><polyline points="239.93,414.60 240.32,402.96 241.03,409.95 241.93,413.20 243.62,414.25 246.62,414.60" fill="none" stroke="#3cb862" stroke-width="0.95" stroke-linejoin="round"/><polyline points="255.40,414.60 256.30,410.18 257.50,412.39 259.00,413.94 262.00,414.60" fill="none" stroke="#3cb862" stroke-width="0.95" stroke-linejoin="round"/><polyline points="270.77,414.60 271.68,410.98 272.88,412.79 274.38,414.06 277.38,414.60" fill="none" stroke="#3cb862" stroke-width="0.95" stroke-linejoin="round"/><rect x="190.90" y="209.60" width="15.97" height="3.3" fill="#f2c6dc"/><rect x="190.90" y="209.60" width="2.9" height="20.40" fill="#f2c6dc"/><rect x="190.90" y="209.60" width="0.9" height="20.40" fill="#f8eef4"/><rect x="204.68" y="209.60" width="2.2" height="20.40" fill="#f2c6dc"/><rect x="206.28" y="209.60" width="15.97" height="3.3" fill="#f2c6dc"/><rect x="206.28" y="209.60" width="2.9" height="20.40" fill="#f2c6dc"/><rect x="206.28" y="209.60" width="0.9" height="20.40" fill="#f8eef4"/><rect x="220.05" y="209.60" width="2.2" height="20.40" fill="#f2c6dc"/><rect x="221.65" y="209.60" width="15.97" height="3.3" fill="#f2c6dc"/><rect x="221.65" y="209.60" width="2.9" height="20.40" fill="#f2c6dc"/><rect x="221.65" y="209.60" width="0.9" height="20.40" fill="#f8eef4"/><rect x="235.43" y="209.60" width="2.2" height="20.40" fill="#f2c6dc"/><rect x="237.03" y="209.60" width="15.97" height="3.3" fill="#f2c6dc"/><rect x="237.03" y="209.60" width="2.9" height="20.40" fill="#f2c6dc"/><rect x="237.03" y="209.60" width="0.9" height="20.40" fill="#f8eef4"/><rect x="250.80" y="209.60" width="2.2" height="20.40" fill="#f2c6dc"/><rect x="252.40" y="209.60" width="15.97" height="3.3" fill="#f2c6dc"/><rect x="252.40" y="209.60" width="2.9" height="20.40" fill="#f2c6dc"/><rect x="252.40" y="209.60" width="0.9" height="20.40" fill="#f8eef4"/><rect x="266.18" y="209.60" width="2.2" height="20.40" fill="#f2c6dc"/><rect x="267.77" y="209.60" width="15.97" height="3.3" fill="#f2c6dc"/><rect x="267.77" y="209.60" width="2.9" height="20.40" fill="#f2c6dc"/><rect x="267.77" y="209.60" width="0.9" height="20.40" fill="#f8eef4"/><rect x="281.55" y="209.60" width="2.2" height="20.40" fill="#f2c6dc"/></svg>
<div style="position:absolute;left:409px;top:56.5px;width:303.20000000000005px;height:351.0px;background:#2d2c32;"></div>
<div style="position:absolute;left:409px;top:56.0px;width:303.20000000000005px;height:1px;background:#f6f6f6;"></div>
<div style="position:absolute;left:408px;top:56.5px;width:1.2px;height:352.0px;background:#6cc088;"></div>
<div style="position:absolute;left:408px;top:407.5px;width:304.20000000000005px;height:1.2px;background:#f0f0ec;"></div>
<div class="t" style="left:409.6px;top:51.3px;font-size:4.9px;color:#222;">Lumi.</div>
<div class="t" style="left:376px;top:54.30px;width:29.2px;text-align:right;font-size:5.1px;color:#222">8420.14</div>
<div style="position:absolute;left:405.5px;top:56.1px;width:3.5px;height:0.9px;background:#555;"></div>
<div class="t" style="left:376px;top:71.81px;width:29.2px;text-align:right;font-size:5.1px;color:#222">8000.00</div>
<div style="position:absolute;left:405.5px;top:73.61385843940835px;width:3.5px;height:0.9px;background:#555;"></div>
<div class="t" style="left:376px;top:155.19px;width:29.2px;text-align:right;font-size:5.1px;color:#222">6000.00</div>
<div style="position:absolute;left:405.5px;top:156.98539382955624px;width:3.5px;height:0.9px;background:#555;"></div>
<div class="t" style="left:376px;top:238.56px;width:29.2px;text-align:right;font-size:5.1px;color:#222">4000.00</div>
<div style="position:absolute;left:405.5px;top:240.35692921970417px;width:3.5px;height:0.9px;background:#555;"></div>
<div class="t" style="left:376px;top:321.93px;width:29.2px;text-align:right;font-size:5.1px;color:#222">2000.00</div>
<div style="position:absolute;left:405.5px;top:323.7284646098521px;width:3.5px;height:0.9px;background:#555;"></div>
<div class="t" style="left:376px;top:405.30px;width:29.2px;text-align:right;font-size:5.1px;color:#222">0.00</div>
<div style="position:absolute;left:405.5px;top:407.1px;width:3.5px;height:0.9px;background:#555;"></div>
<div class="t" style="left:394.2px;top:412.4px;width:30px;text-align:center;font-size:5.5px;color:#222">0.0</div>
<div class="t" style="left:466px;top:412.4px;width:30px;text-align:center;font-size:5.5px;color:#222">20.0</div>
<div class="t" style="left:538.4px;top:412.4px;width:30px;text-align:center;font-size:5.5px;color:#222">40.0</div>
<div class="t" style="left:610.5px;top:412.4px;width:30px;text-align:center;font-size:5.5px;color:#222">1:00.0</div>
<div class="t" style="left:690px;top:412.4px;font-size:5.5px;color:#222;">1:20:01:24.0</div>
<svg style="position:absolute;left:0;top:0" width="768" height="657"><line x1="444.8" y1="57.5" x2="444.8" y2="407.5" stroke="#d0d0d0" stroke-width="0.9" stroke-dasharray="1.2 1.2"/><rect x="462.2" y="56.5" width="1.6" height="351.0" fill="#9a9a9a"/><polyline points="409.5,401.3 416.6,398.6 421.5,403.3 427.4,396.8 432.9,401.1 440.0,396.0 446.0,390.2 452.9,394.5 454.0,400.0 459.5,105.0 466.0,250.0 474.0,340.0 483.0,386.0 486.0,399.2 490.5,387.3 494.9,395.8 500.1,398.9 504.8,405.0 509.1,389.5 513.7,402.0 519.0,404.5 526.2,397.7 530.6,405.0 535.6,383.4 539.9,388.0 544.5,389.1 550.3,387.4 556.6,401.8 561.3,391.6 567.9,400.4 574.5,387.3 581.1,390.6 586.0,396.6 590.3,406.4 595.3,393.1 600.8,388.3 607.9,399.7 612.7,403.1 618.8,389.0 624.4,393.9 628.9,393.8 635.4,392.0 640.2,391.2 646.8,387.6 652.2,388.1 656.9,397.5 663.8,383.9 670.5,387.4 675.7,389.0 680.0,387.6 685.8,388.3 692.6,390.5 697.5,401.1 703.5,401.8 708.1,388.8 712,394.2" fill="none" stroke="#2db454" stroke-width="1.05" stroke-linejoin="miter"/><polyline points="409.5,392.5 416.5,399.0 422.2,406.7 427.0,406.9 431.7,399.4 437.6,401.8 443.4,388.5 449.3,403.0 455.0,401.0 462.0,112.0 470.0,280.0 478.0,360.0 488.0,388.0 491.0,396.8 497.5,388.8 503.5,396.9 509.8,398.0 515.4,388.2 522.3,388.2 528.1,388.1 532.7,404.6 537.2,395.2 543.4,391.3 548.0,392.7 552.7,389.3 557.5,387.9 563.2,387.2 567.9,398.4 573.1,403.1 579.5,406.6 585.0,406.6 591.0,389.8 598.2,391.2 602.7,394.7 609.3,394.6 614.7,388.8 619.7,404.0 625.6,386.0 630.0,393.2 634.4,388.2 641.0,405.3 645.4,389.7 650.6,395.9 655.6,404.4 660.5,397.8 664.9,403.0 670.0,391.8 675.7,403.4 680.0,395.0 686.4,389.0 692.0,381.3 698.6,398.4 705.3,399.1 711.6,387.4 712,392.9" fill="none" stroke="#2db454" stroke-width="1.05" stroke-linejoin="miter"/><polyline points="409.5,396.8 414.7,400.1 419.2,395.1 423.8,405.6 430.7,396.3 435.6,402.3 440.3,399.9 447.3,391.4 452.3,391.5 457.0,400.0 466.5,155.0 473.0,290.0 481.0,350.0 492.0,386.0 495.0,407.0 500.6,396.9 506.3,406.9 510.8,392.0 515.1,400.9 521.0,396.4 527.2,392.7 532.6,400.5 537.2,392.5 541.6,390.3 547.6,392.3 552.3,396.5 559.0,390.9 564.9,389.1 571.2,395.4 575.8,392.8 582.5,395.8 588.6,393.4 592.8,391.0 598.5,396.3 602.9,392.3 607.3,401.7 612.1,392.2 617.8,399.3 624.1,391.7 630.2,398.5 635.2,392.1 641.1,399.8 646.1,393.6 652.3,401.2 657.9,390.7 664.8,403.0 671.8,406.6 678.4,387.6 683.4,402.8 688.3,388.4 694.0,380.9 700.7,396.8 707.0,402.4 712,399.8" fill="none" stroke="#2db454" stroke-width="1.05" stroke-linejoin="miter"/><polyline points="409.5,406.9 415.1,396.2 420.3,401.9 424.5,395.0 429.0,392.2 436.0,402.4 441.3,391.0 446.6,400.2 451.0,405.4 456.0,402.0 464.0,185.0 471.0,300.0 480.0,365.0 490.0,390.0 493.0,388.3 498.0,389.8 503.3,387.9 510.0,394.4 517.0,396.0 521.3,392.4 527.8,394.1 532.1,381.5 537.7,400.1 544.2,387.5 550.3,401.0 555.7,396.7 560.5,388.9 565.4,388.9 570.9,397.2 575.4,393.2 580.3,401.8 587.2,392.0 592.6,396.5 597.9,405.8 605.0,404.5 611.0,389.7 616.1,402.0 621.6,387.9 628.4,399.6 634.7,389.1 640.7,407.0 647.7,390.5 654.8,395.0 659.5,396.6 666.5,392.6 673.0,397.9 677.3,391.4 684.3,394.1 688.8,402.0 695.1,397.8 700.9,395.3 705.8,388.0 710.9,397.8 712,391.2" fill="none" stroke="#2db454" stroke-width="1.05" stroke-linejoin="miter"/><polyline points="409.5,399.4 414.4,391.6 419.6,406.7 425.8,400.3 432.0,392.2 436.3,401.6 442.5,403.8 449.0,398.9 456.1,402.0 459.0,393.0 463.0,390.0 472.7,338.0 477.5,300.0 481.0,345.0 486.0,375.0 495.0,388.0 498.0,402.6 503.1,388.0 507.8,402.5 514.0,381.0 519.4,402.7 524.0,399.0 529.4,389.0 535.8,387.0 541.0,403.3 547.5,406.4 552.8,399.5 557.5,406.9 562.8,380.9 569.8,402.9 576.5,390.6 580.9,397.5 587.8,403.1 594.7,406.4 601.3,384.7 605.6,405.7 610.6,392.1 615.8,401.6 621.9,401.8 627.0,394.5 633.5,388.7 640.5,406.5 646.2,387.9 651.5,402.0 657.2,381.4 663.8,392.2 670.3,394.9 675.5,399.8 679.9,403.1 684.9,398.7 690.7,400.5 697.6,387.2 702.0,405.1 708.4,398.1 712,393.8" fill="none" stroke="#2db454" stroke-width="1.05" stroke-linejoin="miter"/><polyline points="409.5,396.2 416.2,390.4 423.0,402.3 428.3,389.2 433.2,397.1 440.1,397.7 445.5,391.1 450.4,394.1 457.5,405.4 462.0,400.0 473.8,338.0 481.0,335.0 488.0,339.0 496.7,378.0 505.0,392.0 508.0,390.2 512.3,394.1 517.1,387.5 524.1,399.6 529.6,401.8 536.7,404.9 542.7,402.6 547.3,402.9 553.3,394.0 557.6,400.5 562.3,400.8 568.9,389.0 573.4,399.1 579.5,398.2 585.8,398.8 591.0,387.9 596.9,399.9 603.6,387.1 608.4,392.4 612.7,389.0 619.3,398.9 624.9,396.7 630.8,394.2 635.2,394.6 640.9,404.1 646.7,381.5 652.4,390.9 657.2,404.5 664.3,390.3 671.3,399.2 677.3,383.5 683.9,402.6 690.6,383.4 695.5,399.0 700.8,404.5 707.2,382.1 712,392.4" fill="none" stroke="#2db454" stroke-width="1.05" stroke-linejoin="miter"/><polyline points="409.5,406.4 414.1,397.4 420.1,402.1 426.1,400.2 431.6,394.0 437.7,399.2 444.2,394.5 448.9,393.4 453.5,394.1 459.0,392.8 463.0,401.0 470.0,345.0 477.0,369.6 481.0,384.0 492.5,378.0 500.0,392.0 503.0,405.4 509.5,389.8 515.2,399.4 519.9,389.9 526.2,383.7 533.4,397.2 540.3,403.7 547.3,405.7 553.8,403.8 558.8,383.7 564.5,388.6 569.5,396.9 573.8,396.4 580.8,393.4 585.5,384.3 591.3,394.3 598.2,395.9 605.0,404.9 611.1,399.1 616.1,387.2 621.4,391.7 626.1,385.1 632.8,401.9 639.9,395.3 645.1,400.0 649.7,394.7 655.4,382.1 660.3,386.9 664.5,392.9 669.8,402.5 675.8,402.9 681.4,404.3 686.3,397.0 692.4,389.6 697.8,394.7 704.0,395.8 710.1,398.1 712,397.5" fill="none" stroke="#2db454" stroke-width="1.05" stroke-linejoin="miter"/><polyline points="409.5,386.5 415.3,400.5 419.7,388.5 425.5,385.9 430.3,397.3 436.4,388.0 441.6,396.2 448.4,394.5 452.7,393.5 453.0,398.0 461.0,160.0 468.0,270.0 476.0,352.0 486.0,390.0 489.0,392.2 493.9,404.9 498.2,400.3 504.5,390.1 509.5,395.9 516.0,396.5 522.2,387.7 529.0,406.7 533.9,392.1 540.4,400.5 545.5,402.2 551.6,393.1 558.8,397.6 565.1,389.8 571.4,395.6 576.3,387.5 583.2,397.1 587.7,388.4 592.4,399.4 598.6,394.3 605.0,405.7 610.3,390.6 617.2,405.7 624.1,381.1 629.0,397.8 635.7,390.8 642.4,394.4 646.9,405.0 651.7,400.6 656.0,401.9 662.3,399.6 669.4,396.9 675.5,406.4 681.0,391.5 687.3,396.2 694.1,405.2 698.8,407.0 705.3,380.4 710.9,397.2 712,395.1" fill="none" stroke="#2db454" stroke-width="1.05" stroke-linejoin="miter"/></svg>
<div class="t" style="left:719.6px;top:52.2px;font-size:5.3px;color:#222;">Well No.  Lumi.</div>
<div style="position:absolute;left:719.8px;top:60.0px;width:5.2px;height:5.2px;border-left:1px solid #6a6a6a;border-top:1px solid #6a6a6a;background:#f6f3ea;"></div>
<div style="position:absolute;left:742px;top:60.0px;width:21.5px;height:5px;background:#e8707a;"></div>
<div style="position:absolute;left:719.8px;top:67.2px;width:5.2px;height:5.2px;border-left:1px solid #6a6a6a;border-top:1px solid #6a6a6a;background:#f6f3ea;"></div>
<div style="position:absolute;left:742px;top:67.2px;width:21.5px;height:5px;background:#f0ee6a;"></div>
<div style="position:absolute;left:719.8px;top:74.4px;width:5.2px;height:5.2px;border-left:1px solid #6a6a6a;border-top:1px solid #6a6a6a;background:#f6f3ea;"></div>
<div style="position:absolute;left:742px;top:74.4px;width:21.5px;height:5px;background:#2fa858;"></div>
<div style="position:absolute;left:719.8px;top:81.6px;width:5.2px;height:5.2px;border-left:1px solid #6a6a6a;border-top:1px solid #6a6a6a;background:#f6f3ea;"></div>
<div style="position:absolute;left:742px;top:81.6px;width:21.5px;height:5px;background:#3cb4cc;"></div>
<div style="position:absolute;left:719.8px;top:88.8px;width:5.2px;height:5.2px;border-left:1px solid #6a6a6a;border-top:1px solid #6a6a6a;background:#f6f3ea;"></div>
<div style="position:absolute;left:742px;top:88.8px;width:21.5px;height:5px;background:#f4b4d4;"></div>
<div style="position:absolute;left:719.8px;top:96.0px;width:5.2px;height:5.2px;border-left:1px solid #6a6a6a;border-top:1px solid #6a6a6a;background:#f6f3ea;"></div>
<div style="position:absolute;left:742px;top:96.0px;width:21.5px;height:5px;background:#c87076;"></div>
<div style="position:absolute;left:719.8px;top:103.2px;width:5.2px;height:5.2px;border-left:1px solid #6a6a6a;border-top:1px solid #6a6a6a;background:#f6f3ea;"></div>
<div style="position:absolute;left:742px;top:103.2px;width:21.5px;height:5px;background:#f4b27a;"></div>
<div style="position:absolute;left:719.8px;top:110.4px;width:5.2px;height:5.2px;border-left:1px solid #6a6a6a;border-top:1px solid #6a6a6a;background:#f6f3ea;"></div>
<div style="position:absolute;left:742px;top:110.4px;width:21.5px;height:5px;background:#2ea884;"></div>
<div style="position:absolute;left:719.8px;top:117.6px;width:5.2px;height:5.2px;border-left:1px solid #6a6a6a;border-top:1px solid #6a6a6a;background:#f6f3ea;"></div>
<div style="position:absolute;left:742px;top:117.6px;width:21.5px;height:5px;background:#5656b4;"></div>
<div style="position:absolute;left:719.8px;top:124.8px;width:5.2px;height:5.2px;border-left:1px solid #6a6a6a;border-top:1px solid #6a6a6a;background:#f6f3ea;"></div>
<div style="position:absolute;left:742px;top:124.8px;width:21.5px;height:5px;background:#9a66b8;"></div>
<div style="position:absolute;left:719.8px;top:134.8px;width:5.4px;height:5.4px;border-left:1px solid #555;border-top:1px solid #555;background:#fff;"><svg style="position:absolute;left:-1px;top:-1px" width="6" height="6"><path d="M1.2 2.8l1.4 1.6l2.6-3.4" fill="none" stroke="#000" stroke-width="1.1"/></svg></div>
<div class="t" style="left:728px;top:135.2px;font-size:5.5px;color:#222;">Marker</div>
<div style="position:absolute;left:719.8px;top:142.3px;width:5.4px;height:5.4px;border-left:1px solid #555;border-top:1px solid #555;background:#fff;"></div>
<div class="t" style="left:728px;top:142.6px;font-size:5.5px;color:#222;">Av.&amp;S.D.</div>
<div style="position:absolute;left:744.1px;top:148.3px;width:18.4px;height:14.7px;background:#f2f0e8;border-top:1px solid #fff;border-left:1px solid #fff;border-right:1px solid #8a8678;border-bottom:1px solid #8a8678;"><svg style="position:absolute;left:-1px;top:-1px" width="18.4" height="14.7" viewBox="0 0 18.4 14.7"><path d="M4.5 3.5h5l2 2v2M4.5 3.5v9h4" fill="none" stroke="#555" stroke-width="1.1"/><path d="M4.5 3.5h2.5v1.5h-2.5z" fill="#c03030"/><path d="M14.5 9.2a3 3 0 1 0 0 3.2" fill="none" stroke="#d81e28" stroke-width="2.4"/></svg></div>
<div style="position:absolute;left:744.1px;top:164.6px;width:18.4px;height:15.5px;background:#f2f0e8;border-top:1px solid #fff;border-left:1px solid #fff;border-right:1px solid #8a8678;border-bottom:1px solid #8a8678;"><svg style="position:absolute;left:-1px;top:-1px" width="18.4" height="15.5" viewBox="0 0 18.4 15.5"><path d="M3 5.5h4.5M3 10h4.5M7.5 4v8" fill="none" stroke="#333" stroke-width="1.1"/><path d="M9.5 6.5h2" stroke="#999" stroke-width="1"/><path d="M8.5 14.5l3.5-8.5l3.5 8.5z" fill="#d81e28"/></svg></div>
<div style="position:absolute;left:744.1px;top:181.4px;width:18.4px;height:15.4px;background:#f2f0e8;border-top:1px solid #fff;border-left:1px solid #fff;border-right:1px solid #8a8678;border-bottom:1px solid #8a8678;"><svg style="position:absolute;left:-1px;top:-1px" width="18.4" height="15.4" viewBox="0 0 18.4 15.4"><path d="M4 8.5q0-3 3-3.5h4q3 .5 3 3.5v2.5q0 2-2 2h-6q-2 0-2-2z" fill="#6a6a6a" stroke="#2a2a2a" stroke-width="1"/><path d="M6.5 2.5h5v3h-5z" fill="#fff" stroke="#333" stroke-width=".8"/><path d="M5 9.5h8" stroke="#e8e8e8" stroke-width="1.2"/></svg></div>
<div class="t" style="left:5.20px;top:424.8px;width:20.08px;text-align:center;font-size:5.3px;color:#222">1</div>
<div class="t" style="left:15.28px;top:424.8px;width:20.08px;text-align:center;font-size:5.3px;color:#222">2</div>
<div class="t" style="left:25.36px;top:424.8px;width:20.08px;text-align:center;font-size:5.3px;color:#222">3</div>
<div class="t" style="left:35.44px;top:424.8px;width:20.08px;text-align:center;font-size:5.3px;color:#222">4</div>
<div class="t" style="left:45.52px;top:424.8px;width:20.08px;text-align:center;font-size:5.3px;color:#222">5</div>
<div class="t" style="left:55.60px;top:424.8px;width:20.08px;text-align:center;font-size:5.3px;color:#222">6</div>
<div class="t" style="left:65.68px;top:424.8px;width:20.08px;text-align:center;font-size:5.3px;color:#222">7</div>
<div class="t" style="left:75.76px;top:424.8px;width:20.08px;text-align:center;font-size:5.3px;color:#222">8</div>
<div class="t" style="left:85.84px;top:424.8px;width:20.08px;text-align:center;font-size:5.3px;color:#222">9</div>
<div class="t" style="left:95.92px;top:424.8px;width:20.08px;text-align:center;font-size:5.3px;color:#222">10</div>
<div class="t" style="left:106.00px;top:424.8px;width:20.08px;text-align:center;font-size:5.3px;color:#222">11</div>
<div class="t" style="left:116.08px;top:424.8px;width:20.08px;text-align:center;font-size:5.3px;color:#222">12</div>
<div class="t" style="left:126.16px;top:424.8px;width:20.08px;text-align:center;font-size:5.3px;color:#222">13</div>
<div class="t" style="left:136.24px;top:424.8px;width:20.08px;text-align:center;font-size:5.3px;color:#222">14</div>
<div class="t" style="left:146.32px;top:424.8px;width:20.08px;text-align:center;font-size:5.3px;color:#222">15</div>
<div class="t" style="left:156.40px;top:424.8px;width:20.08px;text-align:center;font-size:5.3px;color:#222">16</div>
<div class="t" style="left:166.48px;top:424.8px;width:20.08px;text-align:center;font-size:5.3px;color:#222">17</div>
<div class="t" style="left:176.56px;top:424.8px;width:20.08px;text-align:center;font-size:5.3px;color:#222">18</div>
<div class="t" style="left:186.64px;top:424.8px;width:20.08px;text-align:center;font-size:5.3px;color:#222">19</div>
<div class="t" style="left:196.72px;top:424.8px;width:20.08px;text-align:center;font-size:5.3px;color:#222">20</div>
<div class="t" style="left:206.80px;top:424.8px;width:20.08px;text-align:center;font-size:5.3px;color:#222">21</div>
<div class="t" style="left:216.88px;top:424.8px;width:20.08px;text-align:center;font-size:5.3px;color:#222">22</div>
<div class="t" style="left:226.96px;top:424.8px;width:20.08px;text-align:center;font-size:5.3px;color:#222">23</div>
<div class="t" style="left:237.04px;top:424.8px;width:20.08px;text-align:center;font-size:5.3px;color:#222">24</div>
<div class="t" style="left:4.6px;top:431.8px;font-size:5.2px;color:#333;font-weight:bold;">A</div>
<div class="t" style="left:4.6px;top:438.5px;font-size:5.2px;color:#333;font-weight:bold;">B</div>
<div class="t" style="left:4.6px;top:445.2px;font-size:5.2px;color:#333;font-weight:bold;">C</div>
<div class="t" style="left:4.6px;top:451.90000000000003px;font-size:5.2px;color:#333;font-weight:bold;">D</div>
<div class="t" style="left:4.6px;top:458.6px;font-size:5.2px;color:#333;font-weight:bold;">E</div>
<div class="t" style="left:4.6px;top:465.3px;font-size:5.2px;color:#333;font-weight:bold;">F</div>
<div class="t" style="left:4.6px;top:472.0px;font-size:5.2px;color:#333;font-weight:bold;">G</div>
<div class="t" style="left:4.6px;top:478.7px;font-size:5.2px;color:#333;font-weight:bold;">H</div>
<div class="t" style="left:4.6px;top:485.40000000000003px;font-size:5.2px;color:#333;font-weight:bold;">I</div>
<div class="t" style="left:4.6px;top:492.1px;font-size:5.2px;color:#333;font-weight:bold;">J</div>
<div class="t" style="left:4.6px;top:498.8px;font-size:5.2px;color:#333;font-weight:bold;">K</div>
<div class="t" style="left:4.6px;top:505.5px;font-size:5.2px;color:#333;font-weight:bold;">L</div>
<div class="t" style="left:4.6px;top:512.2px;font-size:5.2px;color:#333;font-weight:bold;">M</div>
<div class="t" style="left:4.6px;top:518.9px;font-size:5.2px;color:#333;font-weight:bold;">N</div>
<div class="t" style="left:4.6px;top:525.6px;font-size:5.2px;color:#333;font-weight:bold;">O</div>
<div class="t" style="left:4.6px;top:532.3000000000001px;font-size:5.2px;color:#333;font-weight:bold;">P</div>
<svg style="position:absolute;left:0;top:0" width="768" height="657"><rect x="10.2" y="430.2" width="241.92" height="107.20" fill="#0c0c38"/><rect x="11.10" y="431.10" width="8.48" height="5.10" fill="rgb(38,38,110)"/><rect x="21.18" y="431.10" width="8.48" height="5.10" fill="rgb(43,43,127)"/><rect x="31.26" y="431.10" width="8.48" height="5.10" fill="rgb(37,37,107)"/><rect x="41.34" y="431.10" width="8.48" height="5.10" fill="rgb(45,45,131)"/><rect x="51.42" y="431.10" width="8.48" height="5.10" fill="rgb(37,37,108)"/><rect x="61.50" y="431.10" width="8.48" height="5.10" fill="rgb(36,36,105)"/><rect x="71.58" y="431.10" width="8.48" height="5.10" fill="rgb(42,42,123)"/><rect x="81.66" y="431.10" width="8.48" height="5.10" fill="rgb(39,39,115)"/><rect x="91.74" y="431.10" width="8.48" height="5.10" fill="rgb(35,35,101)"/><rect x="101.82" y="431.10" width="8.48" height="5.10" fill="rgb(41,41,120)"/><rect x="111.90" y="431.10" width="8.48" height="5.10" fill="rgb(34,34,100)"/><rect x="121.98" y="431.10" width="8.48" height="5.10" fill="rgb(43,43,126)"/><rect x="132.06" y="431.10" width="8.48" height="5.10" fill="#26a048"/><rect x="142.14" y="431.10" width="8.48" height="5.10" fill="#26a048"/><rect x="152.22" y="431.10" width="8.48" height="5.10" fill="#38b4d4"/><rect x="162.30" y="431.10" width="8.48" height="5.10" fill="#38b4d4"/><rect x="172.38" y="431.10" width="8.48" height="5.10" fill="rgb(42,42,123)"/><rect x="182.46" y="431.10" width="8.48" height="5.10" fill="rgb(43,43,126)"/><rect x="192.54" y="431.10" width="8.48" height="5.10" fill="rgb(41,41,120)"/><rect x="202.62" y="431.10" width="8.48" height="5.10" fill="rgb(38,38,110)"/><rect x="212.70" y="431.10" width="8.48" height="5.10" fill="rgb(38,38,112)"/><rect x="222.78" y="431.10" width="8.48" height="5.10" fill="rgb(38,38,112)"/><rect x="232.86" y="431.10" width="8.48" height="5.10" fill="rgb(44,44,130)"/><rect x="242.94" y="431.10" width="8.48" height="5.10" fill="rgb(35,35,101)"/><rect x="11.10" y="437.80" width="8.48" height="5.10" fill="rgb(44,44,129)"/><rect x="21.18" y="437.80" width="8.48" height="5.10" fill="rgb(34,34,98)"/><rect x="31.26" y="437.80" width="8.48" height="5.10" fill="rgb(36,36,105)"/><rect x="41.34" y="437.80" width="8.48" height="5.10" fill="rgb(37,37,107)"/><rect x="51.42" y="437.80" width="8.48" height="5.10" fill="rgb(44,44,130)"/><rect x="61.50" y="437.80" width="8.48" height="5.10" fill="rgb(40,40,116)"/><rect x="71.58" y="437.80" width="8.48" height="5.10" fill="rgb(38,38,111)"/><rect x="81.66" y="437.80" width="8.48" height="5.10" fill="rgb(44,44,129)"/><rect x="91.74" y="437.80" width="8.48" height="5.10" fill="rgb(36,36,106)"/><rect x="101.82" y="437.80" width="8.48" height="5.10" fill="rgb(39,39,114)"/><rect x="111.90" y="437.80" width="8.48" height="5.10" fill="rgb(40,40,117)"/><rect x="121.98" y="437.80" width="8.48" height="5.10" fill="rgb(43,43,125)"/><rect x="132.06" y="437.80" width="8.48" height="5.10" fill="#26a048"/><rect x="142.14" y="437.80" width="8.48" height="5.10" fill="#26a048"/><rect x="152.22" y="437.80" width="8.48" height="5.10" fill="#38b4d4"/><rect x="162.30" y="437.80" width="8.48" height="5.10" fill="#30b0c0"/><rect x="172.38" y="437.80" width="8.48" height="5.10" fill="rgb(43,43,125)"/><rect x="182.46" y="437.80" width="8.48" height="5.10" fill="rgb(41,41,121)"/><rect x="192.54" y="437.80" width="8.48" height="5.10" fill="rgb(38,38,110)"/><rect x="202.62" y="437.80" width="8.48" height="5.10" fill="rgb(37,37,109)"/><rect x="212.70" y="437.80" width="8.48" height="5.10" fill="rgb(35,35,103)"/><rect x="222.78" y="437.80" width="8.48" height="5.10" fill="rgb(44,44,128)"/><rect x="232.86" y="437.80" width="8.48" height="5.10" fill="rgb(41,41,121)"/><rect x="242.94" y="437.80" width="8.48" height="5.10" fill="rgb(42,42,124)"/><rect x="11.10" y="444.50" width="8.48" height="5.10" fill="rgb(36,36,104)"/><rect x="21.18" y="444.50" width="8.48" height="5.10" fill="rgb(39,39,113)"/><rect x="31.26" y="444.50" width="8.48" height="5.10" fill="rgb(43,43,125)"/><rect x="41.34" y="444.50" width="8.48" height="5.10" fill="rgb(40,40,118)"/><rect x="51.42" y="444.50" width="8.48" height="5.10" fill="rgb(35,35,102)"/><rect x="61.50" y="444.50" width="8.48" height="5.10" fill="rgb(39,39,114)"/><rect x="71.58" y="444.50" width="8.48" height="5.10" fill="rgb(44,44,129)"/><rect x="81.66" y="444.50" width="8.48" height="5.10" fill="rgb(36,36,106)"/><rect x="91.74" y="444.50" width="8.48" height="5.10" fill="rgb(36,36,104)"/><rect x="101.82" y="444.50" width="8.48" height="5.10" fill="rgb(37,37,108)"/><rect x="111.90" y="444.50" width="8.48" height="5.10" fill="rgb(42,42,123)"/><rect x="121.98" y="444.50" width="8.48" height="5.10" fill="rgb(44,44,128)"/><rect x="132.06" y="444.50" width="8.48" height="5.10" fill="#a0d030"/><rect x="142.14" y="444.50" width="8.48" height="5.10" fill="#f0e628"/><rect x="152.22" y="444.50" width="8.48" height="5.10" fill="#38b4d4"/><rect x="162.30" y="444.50" width="8.48" height="5.10" fill="#38b4d4"/><rect x="172.38" y="444.50" width="8.48" height="5.10" fill="rgb(35,35,103)"/><rect x="182.46" y="444.50" width="8.48" height="5.10" fill="rgb(35,35,103)"/><rect x="192.54" y="444.50" width="8.48" height="5.10" fill="rgb(36,36,106)"/><rect x="202.62" y="444.50" width="8.48" height="5.10" fill="rgb(37,37,109)"/><rect x="212.70" y="444.50" width="8.48" height="5.10" fill="rgb(40,40,116)"/><rect x="222.78" y="444.50" width="8.48" height="5.10" fill="rgb(35,35,103)"/><rect x="232.86" y="444.50" width="8.48" height="5.10" fill="rgb(37,37,109)"/><rect x="242.94" y="444.50" width="8.48" height="5.10" fill="rgb(36,36,104)"/><rect x="11.10" y="451.20" width="8.48" height="5.10" fill="rgb(45,45,133)"/><rect x="21.18" y="451.20" width="8.48" height="5.10" fill="rgb(42,42,124)"/><rect x="31.26" y="451.20" width="8.48" height="5.10" fill="rgb(35,35,101)"/><rect x="41.34" y="451.20" width="8.48" height="5.10" fill="rgb(45,45,132)"/><rect x="51.42" y="451.20" width="8.48" height="5.10" fill="rgb(35,35,101)"/><rect x="61.50" y="451.20" width="8.48" height="5.10" fill="rgb(38,38,111)"/><rect x="71.58" y="451.20" width="8.48" height="5.10" fill="rgb(45,45,133)"/><rect x="81.66" y="451.20" width="8.48" height="5.10" fill="rgb(43,43,126)"/><rect x="91.74" y="451.20" width="8.48" height="5.10" fill="rgb(42,42,124)"/><rect x="101.82" y="451.20" width="8.48" height="5.10" fill="rgb(39,39,113)"/><rect x="111.90" y="451.20" width="8.48" height="5.10" fill="rgb(36,36,105)"/><rect x="121.98" y="451.20" width="8.48" height="5.10" fill="rgb(41,41,120)"/><rect x="132.06" y="451.20" width="8.48" height="5.10" fill="#f0e628"/><rect x="142.14" y="451.20" width="8.48" height="5.10" fill="#f0e628"/><rect x="152.22" y="451.20" width="8.48" height="5.10" fill="#22a070"/><rect x="162.30" y="451.20" width="8.48" height="5.10" fill="#22b0a0"/><rect x="172.38" y="451.20" width="8.48" height="5.10" fill="rgb(35,35,101)"/><rect x="182.46" y="451.20" width="8.48" height="5.10" fill="rgb(36,36,105)"/><rect x="192.54" y="451.20" width="8.48" height="5.10" fill="rgb(38,38,111)"/><rect x="202.62" y="451.20" width="8.48" height="5.10" fill="rgb(34,34,99)"/><rect x="212.70" y="451.20" width="8.48" height="5.10" fill="rgb(38,38,112)"/><rect x="222.78" y="451.20" width="8.48" height="5.10" fill="rgb(43,43,126)"/><rect x="232.86" y="451.20" width="8.48" height="5.10" fill="rgb(42,42,122)"/><rect x="242.94" y="451.20" width="8.48" height="5.10" fill="rgb(40,40,116)"/><rect x="11.10" y="457.90" width="8.48" height="5.10" fill="rgb(41,41,120)"/><rect x="21.18" y="457.90" width="8.48" height="5.10" fill="rgb(39,39,114)"/><rect x="31.26" y="457.90" width="8.48" height="5.10" fill="rgb(35,35,103)"/><rect x="41.34" y="457.90" width="8.48" height="5.10" fill="rgb(41,41,119)"/><rect x="51.42" y="457.90" width="8.48" height="5.10" fill="rgb(38,38,112)"/><rect x="61.50" y="457.90" width="8.48" height="5.10" fill="rgb(42,42,124)"/><rect x="71.58" y="457.90" width="8.48" height="5.10" fill="rgb(44,44,130)"/><rect x="81.66" y="457.90" width="8.48" height="5.10" fill="rgb(39,39,113)"/><rect x="91.74" y="457.90" width="8.48" height="5.10" fill="rgb(40,40,118)"/><rect x="101.82" y="457.90" width="8.48" height="5.10" fill="rgb(42,42,124)"/><rect x="111.90" y="457.90" width="8.48" height="5.10" fill="rgb(39,39,113)"/><rect x="121.98" y="457.90" width="8.48" height="5.10" fill="rgb(36,36,106)"/><rect x="132.06" y="457.90" width="8.48" height="5.10" fill="#f0e628"/><rect x="142.14" y="457.90" width="8.48" height="5.10" fill="#f4a428"/><rect x="152.22" y="457.90" width="8.48" height="5.10" fill="#22a070"/><rect x="162.30" y="457.90" width="8.48" height="5.10" fill="#22b0a0"/><rect x="172.38" y="457.90" width="8.48" height="5.10" fill="rgb(42,42,123)"/><rect x="182.46" y="457.90" width="8.48" height="5.10" fill="rgb(44,44,129)"/><rect x="192.54" y="457.90" width="8.48" height="5.10" fill="rgb(43,43,125)"/><rect x="202.62" y="457.90" width="8.48" height="5.10" fill="rgb(42,42,123)"/><rect x="212.70" y="457.90" width="8.48" height="5.10" fill="rgb(44,44,128)"/><rect x="222.78" y="457.90" width="8.48" height="5.10" fill="rgb(42,42,122)"/><rect x="232.86" y="457.90" width="8.48" height="5.10" fill="rgb(41,41,121)"/><rect x="242.94" y="457.90" width="8.48" height="5.10" fill="rgb(39,39,114)"/><rect x="11.10" y="464.60" width="8.48" height="5.10" fill="rgb(37,37,109)"/><rect x="21.18" y="464.60" width="8.48" height="5.10" fill="rgb(41,41,120)"/><rect x="31.26" y="464.60" width="8.48" height="5.10" fill="rgb(35,35,101)"/><rect x="41.34" y="464.60" width="8.48" height="5.10" fill="rgb(39,39,113)"/><rect x="51.42" y="464.60" width="8.48" height="5.10" fill="rgb(43,43,126)"/><rect x="61.50" y="464.60" width="8.48" height="5.10" fill="rgb(42,42,123)"/><rect x="71.58" y="464.60" width="8.48" height="5.10" fill="rgb(41,41,120)"/><rect x="81.66" y="464.60" width="8.48" height="5.10" fill="rgb(37,37,107)"/><rect x="91.74" y="464.60" width="8.48" height="5.10" fill="rgb(39,39,113)"/><rect x="101.82" y="464.60" width="8.48" height="5.10" fill="rgb(39,39,114)"/><rect x="111.90" y="464.60" width="8.48" height="5.10" fill="rgb(41,41,120)"/><rect x="121.98" y="464.60" width="8.48" height="5.10" fill="rgb(38,38,112)"/><rect x="132.06" y="464.60" width="8.48" height="5.10" fill="#f4c424"/><rect x="142.14" y="464.60" width="8.48" height="5.10" fill="#f4c028"/><rect x="152.22" y="464.60" width="8.48" height="5.10" fill="#22a070"/><rect x="162.30" y="464.60" width="8.48" height="5.10" fill="#22b0a0"/><rect x="172.38" y="464.60" width="8.48" height="5.10" fill="rgb(42,42,122)"/><rect x="182.46" y="464.60" width="8.48" height="5.10" fill="rgb(45,45,131)"/><rect x="192.54" y="464.60" width="8.48" height="5.10" fill="rgb(36,36,104)"/><rect x="202.62" y="464.60" width="8.48" height="5.10" fill="rgb(41,41,121)"/><rect x="212.70" y="464.60" width="8.48" height="5.10" fill="rgb(43,43,126)"/><rect x="222.78" y="464.60" width="8.48" height="5.10" fill="rgb(38,38,111)"/><rect x="232.86" y="464.60" width="8.48" height="5.10" fill="rgb(39,39,115)"/><rect x="242.94" y="464.60" width="8.48" height="5.10" fill="rgb(45,45,133)"/><rect x="11.10" y="471.30" width="8.48" height="5.10" fill="rgb(34,34,99)"/><rect x="21.18" y="471.30" width="8.48" height="5.10" fill="rgb(40,40,117)"/><rect x="31.26" y="471.30" width="8.48" height="5.10" fill="rgb(35,35,103)"/><rect x="41.34" y="471.30" width="8.48" height="5.10" fill="rgb(43,43,126)"/><rect x="51.42" y="471.30" width="8.48" height="5.10" fill="rgb(45,45,131)"/><rect x="61.50" y="471.30" width="8.48" height="5.10" fill="rgb(40,40,116)"/><rect x="71.58" y="471.30" width="8.48" height="5.10" fill="rgb(35,35,101)"/><rect x="81.66" y="471.30" width="8.48" height="5.10" fill="rgb(40,40,118)"/><rect x="91.74" y="471.30" width="8.48" height="5.10" fill="rgb(40,40,117)"/><rect x="101.82" y="471.30" width="8.48" height="5.10" fill="rgb(42,42,123)"/><rect x="111.90" y="471.30" width="8.48" height="5.10" fill="rgb(40,40,116)"/><rect x="121.98" y="471.30" width="8.48" height="5.10" fill="rgb(41,41,121)"/><rect x="132.06" y="471.30" width="8.48" height="5.10" fill="#f4c424"/><rect x="142.14" y="471.30" width="8.48" height="5.10" fill="#f4a428"/><rect x="152.22" y="471.30" width="8.48" height="5.10" fill="#26a050"/><rect x="162.30" y="471.30" width="8.48" height="5.10" fill="#38b4d4"/><rect x="172.38" y="471.30" width="8.48" height="5.10" fill="rgb(43,43,127)"/><rect x="182.46" y="471.30" width="8.48" height="5.10" fill="rgb(40,40,116)"/><rect x="192.54" y="471.30" width="8.48" height="5.10" fill="rgb(38,38,112)"/><rect x="202.62" y="471.30" width="8.48" height="5.10" fill="rgb(45,45,132)"/><rect x="212.70" y="471.30" width="8.48" height="5.10" fill="rgb(36,36,105)"/><rect x="222.78" y="471.30" width="8.48" height="5.10" fill="rgb(42,42,122)"/><rect x="232.86" y="471.30" width="8.48" height="5.10" fill="rgb(38,38,112)"/><rect x="242.94" y="471.30" width="8.48" height="5.10" fill="rgb(43,43,125)"/><rect x="11.10" y="478.00" width="8.48" height="5.10" fill="rgb(35,35,102)"/><rect x="21.18" y="478.00" width="8.48" height="5.10" fill="rgb(45,45,133)"/><rect x="31.26" y="478.00" width="8.48" height="5.10" fill="rgb(38,38,110)"/><rect x="41.34" y="478.00" width="8.48" height="5.10" fill="rgb(34,34,100)"/><rect x="51.42" y="478.00" width="8.48" height="5.10" fill="rgb(37,37,107)"/><rect x="61.50" y="478.00" width="8.48" height="5.10" fill="rgb(38,38,112)"/><rect x="71.58" y="478.00" width="8.48" height="5.10" fill="rgb(34,34,98)"/><rect x="81.66" y="478.00" width="8.48" height="5.10" fill="rgb(39,39,113)"/><rect x="91.74" y="478.00" width="8.48" height="5.10" fill="rgb(39,39,113)"/><rect x="101.82" y="478.00" width="8.48" height="5.10" fill="rgb(42,42,123)"/><rect x="111.90" y="478.00" width="8.48" height="5.10" fill="rgb(38,38,110)"/><rect x="121.98" y="478.00" width="8.48" height="5.10" fill="rgb(37,37,107)"/><rect x="132.06" y="478.00" width="8.48" height="5.10" fill="#f0e628"/><rect x="142.14" y="478.00" width="8.48" height="5.10" fill="#f4a428"/><rect x="152.22" y="478.00" width="8.48" height="5.10" fill="#26a050"/><rect x="162.30" y="478.00" width="8.48" height="5.10" fill="#22b0a0"/><rect x="172.38" y="478.00" width="8.48" height="5.10" fill="rgb(36,36,106)"/><rect x="182.46" y="478.00" width="8.48" height="5.10" fill="rgb(42,42,124)"/><rect x="192.54" y="478.00" width="8.48" height="5.10" fill="rgb(45,45,131)"/><rect x="202.62" y="478.00" width="8.48" height="5.10" fill="rgb(40,40,116)"/><rect x="212.70" y="478.00" width="8.48" height="5.10" fill="rgb(36,36,105)"/><rect x="222.78" y="478.00" width="8.48" height="5.10" fill="rgb(43,43,126)"/><rect x="232.86" y="478.00" width="8.48" height="5.10" fill="rgb(38,38,112)"/><rect x="242.94" y="478.00" width="8.48" height="5.10" fill="rgb(36,36,105)"/><rect x="11.10" y="484.70" width="8.48" height="5.10" fill="rgb(35,35,102)"/><rect x="21.18" y="484.70" width="8.48" height="5.10" fill="rgb(43,43,125)"/><rect x="31.26" y="484.70" width="8.48" height="5.10" fill="rgb(43,43,127)"/><rect x="41.34" y="484.70" width="8.48" height="5.10" fill="rgb(41,41,120)"/><rect x="51.42" y="484.70" width="8.48" height="5.10" fill="rgb(39,39,114)"/><rect x="61.50" y="484.70" width="8.48" height="5.10" fill="rgb(40,40,118)"/><rect x="71.58" y="484.70" width="8.48" height="5.10" fill="rgb(36,36,106)"/><rect x="81.66" y="484.70" width="8.48" height="5.10" fill="rgb(45,45,132)"/><rect x="91.74" y="484.70" width="8.48" height="5.10" fill="rgb(38,38,110)"/><rect x="101.82" y="484.70" width="8.48" height="5.10" fill="rgb(41,41,120)"/><rect x="111.90" y="484.70" width="8.48" height="5.10" fill="rgb(43,43,127)"/><rect x="121.98" y="484.70" width="8.48" height="5.10" fill="rgb(43,43,127)"/><rect x="132.06" y="484.70" width="8.48" height="5.10" fill="#f0e628"/><rect x="142.14" y="484.70" width="8.48" height="5.10" fill="#f4c028"/><rect x="152.22" y="484.70" width="8.48" height="5.10" fill="#22a070"/><rect x="162.30" y="484.70" width="8.48" height="5.10" fill="#22b0a0"/><rect x="172.38" y="484.70" width="8.48" height="5.10" fill="rgb(39,39,114)"/><rect x="182.46" y="484.70" width="8.48" height="5.10" fill="rgb(37,37,108)"/><rect x="192.54" y="484.70" width="8.48" height="5.10" fill="rgb(40,40,117)"/><rect x="202.62" y="484.70" width="8.48" height="5.10" fill="rgb(35,35,102)"/><rect x="212.70" y="484.70" width="8.48" height="5.10" fill="rgb(44,44,128)"/><rect x="222.78" y="484.70" width="8.48" height="5.10" fill="rgb(38,38,110)"/><rect x="232.86" y="484.70" width="8.48" height="5.10" fill="rgb(44,44,128)"/><rect x="242.94" y="484.70" width="8.48" height="5.10" fill="rgb(37,37,107)"/><rect x="11.10" y="491.40" width="8.48" height="5.10" fill="rgb(38,38,111)"/><rect x="21.18" y="491.40" width="8.48" height="5.10" fill="rgb(37,37,107)"/><rect x="31.26" y="491.40" width="8.48" height="5.10" fill="rgb(39,39,113)"/><rect x="41.34" y="491.40" width="8.48" height="5.10" fill="rgb(36,36,104)"/><rect x="51.42" y="491.40" width="8.48" height="5.10" fill="rgb(34,34,98)"/><rect x="61.50" y="491.40" width="8.48" height="5.10" fill="rgb(42,42,123)"/><rect x="71.58" y="491.40" width="8.48" height="5.10" fill="rgb(37,37,108)"/><rect x="81.66" y="491.40" width="8.48" height="5.10" fill="rgb(36,36,106)"/><rect x="91.74" y="491.40" width="8.48" height="5.10" fill="rgb(37,37,108)"/><rect x="101.82" y="491.40" width="8.48" height="5.10" fill="rgb(39,39,115)"/><rect x="111.90" y="491.40" width="8.48" height="5.10" fill="rgb(39,39,113)"/><rect x="121.98" y="491.40" width="8.48" height="5.10" fill="rgb(41,41,120)"/><rect x="132.06" y="491.40" width="8.48" height="5.10" fill="#f07a28"/><rect x="142.14" y="491.40" width="8.48" height="5.10" fill="#f0e628"/><rect x="152.22" y="491.40" width="8.48" height="5.10" fill="#22a070"/><rect x="162.30" y="491.40" width="8.48" height="5.10" fill="#22b0a0"/><rect x="172.38" y="491.40" width="8.48" height="5.10" fill="rgb(41,41,121)"/><rect x="182.46" y="491.40" width="8.48" height="5.10" fill="rgb(38,38,111)"/><rect x="192.54" y="491.40" width="8.48" height="5.10" fill="rgb(45,45,131)"/><rect x="202.62" y="491.40" width="8.48" height="5.10" fill="rgb(44,44,128)"/><rect x="212.70" y="491.40" width="8.48" height="5.10" fill="rgb(34,34,100)"/><rect x="222.78" y="491.40" width="8.48" height="5.10" fill="rgb(43,43,127)"/><rect x="232.86" y="491.40" width="8.48" height="5.10" fill="rgb(44,44,130)"/><rect x="242.94" y="491.40" width="8.48" height="5.10" fill="rgb(43,43,126)"/><rect x="11.10" y="498.10" width="8.48" height="5.10" fill="rgb(35,35,103)"/><rect x="21.18" y="498.10" width="8.48" height="5.10" fill="rgb(43,43,127)"/><rect x="31.26" y="498.10" width="8.48" height="5.10" fill="rgb(41,41,120)"/><rect x="41.34" y="498.10" width="8.48" height="5.10" fill="rgb(34,34,98)"/><rect x="51.42" y="498.10" width="8.48" height="5.10" fill="rgb(34,34,98)"/><rect x="61.50" y="498.10" width="8.48" height="5.10" fill="rgb(45,45,132)"/><rect x="71.58" y="498.10" width="8.48" height="5.10" fill="rgb(41,41,121)"/><rect x="81.66" y="498.10" width="8.48" height="5.10" fill="rgb(37,37,107)"/><rect x="91.74" y="498.10" width="8.48" height="5.10" fill="rgb(35,35,101)"/><rect x="101.82" y="498.10" width="8.48" height="5.10" fill="rgb(35,35,103)"/><rect x="111.90" y="498.10" width="8.48" height="5.10" fill="rgb(36,36,106)"/><rect x="121.98" y="498.10" width="8.48" height="5.10" fill="rgb(43,43,125)"/><rect x="132.06" y="498.10" width="8.48" height="5.10" fill="#f07a28"/><rect x="142.14" y="498.10" width="8.48" height="5.10" fill="#f4c028"/><rect x="152.22" y="498.10" width="8.48" height="5.10" fill="#26a050"/><rect x="162.30" y="498.10" width="8.48" height="5.10" fill="#30b0c0"/><rect x="172.38" y="498.10" width="8.48" height="5.10" fill="rgb(38,38,110)"/><rect x="182.46" y="498.10" width="8.48" height="5.10" fill="rgb(35,35,103)"/><rect x="192.54" y="498.10" width="8.48" height="5.10" fill="rgb(44,44,130)"/><rect x="202.62" y="498.10" width="8.48" height="5.10" fill="rgb(43,43,126)"/><rect x="212.70" y="498.10" width="8.48" height="5.10" fill="rgb(36,36,104)"/><rect x="222.78" y="498.10" width="8.48" height="5.10" fill="rgb(44,44,130)"/><rect x="232.86" y="498.10" width="8.48" height="5.10" fill="rgb(41,41,119)"/><rect x="242.94" y="498.10" width="8.48" height="5.10" fill="rgb(43,43,126)"/><rect x="11.10" y="504.80" width="8.48" height="5.10" fill="rgb(42,42,122)"/><rect x="21.18" y="504.80" width="8.48" height="5.10" fill="rgb(44,44,130)"/><rect x="31.26" y="504.80" width="8.48" height="5.10" fill="rgb(43,43,126)"/><rect x="41.34" y="504.80" width="8.48" height="5.10" fill="rgb(44,44,128)"/><rect x="51.42" y="504.80" width="8.48" height="5.10" fill="rgb(36,36,105)"/><rect x="61.50" y="504.80" width="8.48" height="5.10" fill="rgb(42,42,122)"/><rect x="71.58" y="504.80" width="8.48" height="5.10" fill="rgb(40,40,117)"/><rect x="81.66" y="504.80" width="8.48" height="5.10" fill="rgb(42,42,124)"/><rect x="91.74" y="504.80" width="8.48" height="5.10" fill="rgb(39,39,113)"/><rect x="101.82" y="504.80" width="8.48" height="5.10" fill="rgb(44,44,129)"/><rect x="111.90" y="504.80" width="8.48" height="5.10" fill="rgb(40,40,117)"/><rect x="121.98" y="504.80" width="8.48" height="5.10" fill="rgb(37,37,107)"/><rect x="132.06" y="504.80" width="8.48" height="5.10" fill="#f4c424"/><rect x="142.14" y="504.80" width="8.48" height="5.10" fill="#f08a2c"/><rect x="152.22" y="504.80" width="8.48" height="5.10" fill="#26a050"/><rect x="162.30" y="504.80" width="8.48" height="5.10" fill="#22b0a0"/><rect x="172.38" y="504.80" width="8.48" height="5.10" fill="rgb(36,36,106)"/><rect x="182.46" y="504.80" width="8.48" height="5.10" fill="rgb(35,35,103)"/><rect x="192.54" y="504.80" width="8.48" height="5.10" fill="rgb(39,39,115)"/><rect x="202.62" y="504.80" width="8.48" height="5.10" fill="rgb(34,34,100)"/><rect x="212.70" y="504.80" width="8.48" height="5.10" fill="rgb(39,39,114)"/><rect x="222.78" y="504.80" width="8.48" height="5.10" fill="rgb(35,35,103)"/><rect x="232.86" y="504.80" width="8.48" height="5.10" fill="rgb(39,39,115)"/><rect x="242.94" y="504.80" width="8.48" height="5.10" fill="rgb(39,39,115)"/><rect x="11.10" y="511.50" width="8.48" height="5.10" fill="rgb(40,40,117)"/><rect x="21.18" y="511.50" width="8.48" height="5.10" fill="rgb(44,44,129)"/><rect x="31.26" y="511.50" width="8.48" height="5.10" fill="rgb(34,34,98)"/><rect x="41.34" y="511.50" width="8.48" height="5.10" fill="rgb(44,44,128)"/><rect x="51.42" y="511.50" width="8.48" height="5.10" fill="rgb(39,39,114)"/><rect x="61.50" y="511.50" width="8.48" height="5.10" fill="rgb(40,40,118)"/><rect x="71.58" y="511.50" width="8.48" height="5.10" fill="rgb(41,41,121)"/><rect x="81.66" y="511.50" width="8.48" height="5.10" fill="rgb(44,44,128)"/><rect x="91.74" y="511.50" width="8.48" height="5.10" fill="rgb(38,38,111)"/><rect x="101.82" y="511.50" width="8.48" height="5.10" fill="rgb(39,39,113)"/><rect x="111.90" y="511.50" width="8.48" height="5.10" fill="rgb(45,45,132)"/><rect x="121.98" y="511.50" width="8.48" height="5.10" fill="rgb(34,34,100)"/><rect x="132.06" y="511.50" width="8.48" height="5.10" fill="#f0e628"/><rect x="142.14" y="511.50" width="8.48" height="5.10" fill="#b8d830"/><rect x="152.22" y="511.50" width="8.48" height="5.10" fill="#22a070"/><rect x="162.30" y="511.50" width="8.48" height="5.10" fill="#38b4d4"/><rect x="172.38" y="511.50" width="8.48" height="5.10" fill="rgb(41,41,120)"/><rect x="182.46" y="511.50" width="8.48" height="5.10" fill="rgb(41,41,120)"/><rect x="192.54" y="511.50" width="8.48" height="5.10" fill="rgb(34,34,99)"/><rect x="202.62" y="511.50" width="8.48" height="5.10" fill="rgb(41,41,119)"/><rect x="212.70" y="511.50" width="8.48" height="5.10" fill="rgb(42,42,122)"/><rect x="222.78" y="511.50" width="8.48" height="5.10" fill="rgb(45,45,131)"/><rect x="232.86" y="511.50" width="8.48" height="5.10" fill="rgb(37,37,109)"/><rect x="242.94" y="511.50" width="8.48" height="5.10" fill="rgb(45,45,133)"/><rect x="11.10" y="518.20" width="8.48" height="5.10" fill="rgb(40,40,116)"/><rect x="21.18" y="518.20" width="8.48" height="5.10" fill="rgb(39,39,115)"/><rect x="31.26" y="518.20" width="8.48" height="5.10" fill="rgb(44,44,130)"/><rect x="41.34" y="518.20" width="8.48" height="5.10" fill="rgb(34,34,99)"/><rect x="51.42" y="518.20" width="8.48" height="5.10" fill="rgb(42,42,123)"/><rect x="61.50" y="518.20" width="8.48" height="5.10" fill="rgb(41,41,120)"/><rect x="71.58" y="518.20" width="8.48" height="5.10" fill="rgb(38,38,110)"/><rect x="81.66" y="518.20" width="8.48" height="5.10" fill="rgb(44,44,129)"/><rect x="91.74" y="518.20" width="8.48" height="5.10" fill="rgb(38,38,111)"/><rect x="101.82" y="518.20" width="8.48" height="5.10" fill="rgb(39,39,115)"/><rect x="111.90" y="518.20" width="8.48" height="5.10" fill="rgb(40,40,116)"/><rect x="121.98" y="518.20" width="8.48" height="5.10" fill="rgb(43,43,125)"/><rect x="132.06" y="518.20" width="8.48" height="5.10" fill="#f0e628"/><rect x="142.14" y="518.20" width="8.48" height="5.10" fill="#f0e628"/><rect x="152.22" y="518.20" width="8.48" height="5.10" fill="#22a070"/><rect x="162.30" y="518.20" width="8.48" height="5.10" fill="#38b4d4"/><rect x="172.38" y="518.20" width="8.48" height="5.10" fill="rgb(36,36,105)"/><rect x="182.46" y="518.20" width="8.48" height="5.10" fill="rgb(39,39,113)"/><rect x="192.54" y="518.20" width="8.48" height="5.10" fill="rgb(39,39,113)"/><rect x="202.62" y="518.20" width="8.48" height="5.10" fill="rgb(40,40,117)"/><rect x="212.70" y="518.20" width="8.48" height="5.10" fill="rgb(43,43,127)"/><rect x="222.78" y="518.20" width="8.48" height="5.10" fill="rgb(37,37,108)"/><rect x="232.86" y="518.20" width="8.48" height="5.10" fill="rgb(43,43,127)"/><rect x="242.94" y="518.20" width="8.48" height="5.10" fill="rgb(38,38,112)"/><rect x="11.10" y="524.90" width="8.48" height="5.10" fill="rgb(40,40,116)"/><rect x="21.18" y="524.90" width="8.48" height="5.10" fill="rgb(37,37,107)"/><rect x="31.26" y="524.90" width="8.48" height="5.10" fill="rgb(40,40,116)"/><rect x="41.34" y="524.90" width="8.48" height="5.10" fill="rgb(45,45,133)"/><rect x="51.42" y="524.90" width="8.48" height="5.10" fill="rgb(41,41,121)"/><rect x="61.50" y="524.90" width="8.48" height="5.10" fill="rgb(43,43,126)"/><rect x="71.58" y="524.90" width="8.48" height="5.10" fill="rgb(37,37,109)"/><rect x="81.66" y="524.90" width="8.48" height="5.10" fill="rgb(37,37,109)"/><rect x="91.74" y="524.90" width="8.48" height="5.10" fill="rgb(37,37,108)"/><rect x="101.82" y="524.90" width="8.48" height="5.10" fill="rgb(41,41,119)"/><rect x="111.90" y="524.90" width="8.48" height="5.10" fill="rgb(41,41,120)"/><rect x="121.98" y="524.90" width="8.48" height="5.10" fill="rgb(43,43,126)"/><rect x="132.06" y="524.90" width="8.48" height="5.10" fill="#f0e628"/><rect x="142.14" y="524.90" width="8.48" height="5.10" fill="#c0dc30"/><rect x="152.22" y="524.90" width="8.48" height="5.10" fill="#22a890"/><rect x="162.30" y="524.90" width="8.48" height="5.10" fill="#38b4d4"/><rect x="172.38" y="524.90" width="8.48" height="5.10" fill="rgb(34,34,99)"/><rect x="182.46" y="524.90" width="8.48" height="5.10" fill="rgb(42,42,124)"/><rect x="192.54" y="524.90" width="8.48" height="5.10" fill="rgb(44,44,129)"/><rect x="202.62" y="524.90" width="8.48" height="5.10" fill="rgb(40,40,117)"/><rect x="212.70" y="524.90" width="8.48" height="5.10" fill="rgb(34,34,99)"/><rect x="222.78" y="524.90" width="8.48" height="5.10" fill="rgb(37,37,108)"/><rect x="232.86" y="524.90" width="8.48" height="5.10" fill="rgb(34,34,98)"/><rect x="242.94" y="524.90" width="8.48" height="5.10" fill="rgb(36,36,104)"/><rect x="11.10" y="531.60" width="8.48" height="5.10" fill="rgb(45,45,131)"/><rect x="21.18" y="531.60" width="8.48" height="5.10" fill="rgb(41,41,119)"/><rect x="31.26" y="531.60" width="8.48" height="5.10" fill="rgb(41,41,121)"/><rect x="41.34" y="531.60" width="8.48" height="5.10" fill="rgb(43,43,126)"/><rect x="51.42" y="531.60" width="8.48" height="5.10" fill="rgb(44,44,130)"/><rect x="61.50" y="531.60" width="8.48" height="5.10" fill="rgb(41,41,120)"/><rect x="71.58" y="531.60" width="8.48" height="5.10" fill="rgb(41,41,120)"/><rect x="81.66" y="531.60" width="8.48" height="5.10" fill="rgb(41,41,120)"/><rect x="91.74" y="531.60" width="8.48" height="5.10" fill="rgb(42,42,123)"/><rect x="101.82" y="531.60" width="8.48" height="5.10" fill="rgb(41,41,119)"/><rect x="111.90" y="531.60" width="8.48" height="5.10" fill="rgb(42,42,122)"/><rect x="121.98" y="531.60" width="8.48" height="5.10" fill="rgb(36,36,105)"/><rect x="132.06" y="531.60" width="8.48" height="5.10" fill="#38b4c4"/><rect x="142.14" y="531.60" width="8.48" height="5.10" fill="#26a048"/><rect x="152.22" y="531.60" width="8.48" height="5.10" fill="#38b4d4"/><rect x="162.30" y="531.60" width="8.48" height="5.10" fill="#38b4d4"/><rect x="172.38" y="531.60" width="8.48" height="5.10" fill="rgb(42,42,122)"/><rect x="182.46" y="531.60" width="8.48" height="5.10" fill="rgb(39,39,114)"/><rect x="192.54" y="531.60" width="8.48" height="5.10" fill="rgb(43,43,125)"/><rect x="202.62" y="531.60" width="8.48" height="5.10" fill="rgb(35,35,101)"/><rect x="212.70" y="531.60" width="8.48" height="5.10" fill="rgb(36,36,104)"/><rect x="222.78" y="531.60" width="8.48" height="5.10" fill="rgb(34,34,99)"/><rect x="232.86" y="531.60" width="8.48" height="5.10" fill="rgb(43,43,125)"/><rect x="242.94" y="531.60" width="8.48" height="5.10" fill="rgb(44,44,130)"/></svg>
<div style="position:absolute;left:253.8px;top:430.5px;width:9.5px;height:97px;background:#111;"></div>
<div style="position:absolute;left:254.8px;top:431.5px;width:7.5px;height:95px;background:linear-gradient(#e02828 0%,#f07028 15%,#f0c020 25%,#e8e820 33%,#a0d020 42%,#20a040 52%,#20a890 62%,#20b0e0 72%,#2050c0 82%,#202080 92%,#18185a 100%);"></div>
<div style="position:absolute;left:255px;top:529.5px;width:7.5px;height:7.5px;background:#d8d4c8;border:1px solid #999;"><div style="position:absolute;left:1px;top:1px;width:1.5px;height:4px;background:#c03030"></div><div style="position:absolute;left:3px;top:1px;width:1.5px;height:4px;background:#30a050"></div></div>
<div style="position:absolute;left:273px;top:424.8px;width:253.0px;height:120.19999999999999px;background:#fff;border:1px solid #9a9a9a;border-right-color:#d0d0d0;border-bottom-color:#e0e0e0;"></div>
<div style="position:absolute;left:274px;top:425.8px;width:15px;height:8.6px;background:#f1efe4;border-right:1px solid #b8b4a4;border-bottom:1px solid #c8c4b4;box-shadow:inset 1px 0 0 #fff;"><div class="t" style="left:1.8px;top:2.0px;font-size:5.4px;color:#111;overflow:hidden;width:12.5px">Hit</div></div>
<div style="position:absolute;left:289px;top:425.8px;width:17.600000000000023px;height:8.6px;background:#f1efe4;border-right:1px solid #b8b4a4;border-bottom:1px solid #c8c4b4;box-shadow:inset 1px 0 0 #fff;"><div class="t" style="left:1.8px;top:2.0px;font-size:5.4px;color:#111;overflow:hidden;width:15.100000000000023px">Wel.</div></div>
<div style="position:absolute;left:306.6px;top:425.8px;width:36.89999999999998px;height:8.6px;background:#f1efe4;border-right:1px solid #b8b4a4;border-bottom:1px solid #c8c4b4;box-shadow:inset 1px 0 0 #fff;"><div class="t" style="left:1.8px;top:2.0px;font-size:5.4px;color:#111;overflow:hidden;width:34.39999999999998px">No.1 Integ...</div></div>
<div style="position:absolute;left:343.5px;top:425.8px;width:37.0px;height:8.6px;background:#f1efe4;border-right:1px solid #b8b4a4;border-bottom:1px solid #c8c4b4;box-shadow:inset 1px 0 0 #fff;"><div class="t" style="left:1.8px;top:2.0px;font-size:5.4px;color:#111;overflow:hidden;width:34.5px">No.1 Max R.</div></div>
<div style="position:absolute;left:380.5px;top:425.8px;width:35.89999999999998px;height:8.6px;background:#f1efe4;border-right:1px solid #b8b4a4;border-bottom:1px solid #c8c4b4;box-shadow:inset 1px 0 0 #fff;"><div class="t" style="left:1.8px;top:2.0px;font-size:5.4px;color:#111;overflow:hidden;width:33.39999999999998px">No.2 Integ...</div></div>
<div style="position:absolute;left:416.4px;top:425.8px;width:36.60000000000002px;height:8.6px;background:#f1efe4;border-right:1px solid #b8b4a4;border-bottom:1px solid #c8c4b4;box-shadow:inset 1px 0 0 #fff;"><div class="t" style="left:1.8px;top:2.0px;font-size:5.4px;color:#111;overflow:hidden;width:34.10000000000002px">No.2 Max R.</div></div>
<div style="position:absolute;left:453px;top:425.8px;width:36.69999999999999px;height:8.6px;background:#f1efe4;border-right:1px solid #b8b4a4;border-bottom:1px solid #c8c4b4;box-shadow:inset 1px 0 0 #fff;"><div class="t" style="left:1.8px;top:2.0px;font-size:5.4px;color:#111;overflow:hidden;width:34.19999999999999px">No.3 Integ...</div></div>
<div style="position:absolute;left:489.7px;top:425.8px;width:29.30000000000001px;height:8.6px;background:#f1efe4;border-right:1px solid #b8b4a4;border-bottom:1px solid #c8c4b4;box-shadow:inset 1px 0 0 #fff;"><div class="t" style="left:1.8px;top:2.0px;font-size:5.4px;color:#111;overflow:hidden;width:26.80000000000001px">No.3 Max R.</div></div>
<div style="position:absolute;left:274px;top:440.0799999999999px;width:243.5px;height:0.6px;background:#f0f0f0;"></div>
<div class="t" style="left:292px;top:435.29999999999995px;font-size:5.5px;color:#000;">A1</div>
<div class="t" style="left:308.6px;top:435.29999999999995px;font-size:5.5px;color:#000;">222.043</div>
<div class="t" style="left:345px;top:435.29999999999995px;font-size:5.5px;color:#000;">5.085</div>
<div class="t" style="left:382.5px;top:435.29999999999995px;font-size:5.5px;color:#000;">N/A</div>
<div class="t" style="left:418.4px;top:435.29999999999995px;font-size:5.5px;color:#000;">N/A</div>
<div class="t" style="left:455px;top:435.29999999999995px;font-size:5.5px;color:#000;">N/A</div>
<div class="t" style="left:491.7px;top:435.29999999999995px;font-size:5.5px;color:#000;">N/A</div>
<div style="position:absolute;left:274px;top:446.3599999999999px;width:243.5px;height:0.6px;background:#f0f0f0;"></div>
<div style="position:absolute;left:276.2px;top:442.28px;width:3.6px;height:3.8px;box-sizing:border-box;border:0.9px solid #555;border-radius:50%"></div>
<div class="t" style="left:292px;top:441.5799999999999px;font-size:5.5px;color:#000;">A2</div>
<div class="t" style="left:308.6px;top:441.5799999999999px;font-size:5.5px;color:#000;">0.000</div>
<div class="t" style="left:345px;top:441.5799999999999px;font-size:5.5px;color:#000;">0.000</div>
<div class="t" style="left:382.5px;top:441.5799999999999px;font-size:5.5px;color:#000;">N/A</div>
<div class="t" style="left:418.4px;top:441.5799999999999px;font-size:5.5px;color:#000;">N/A</div>
<div class="t" style="left:455px;top:441.5799999999999px;font-size:5.5px;color:#000;">N/A</div>
<div class="t" style="left:491.7px;top:441.5799999999999px;font-size:5.5px;color:#000;">N/A</div>
<div style="position:absolute;left:274px;top:452.63999999999993px;width:243.5px;height:0.6px;background:#f0f0f0;"></div>
<div class="t" style="left:292px;top:447.85999999999996px;font-size:5.5px;color:#000;">A3</div>
<div class="t" style="left:308.6px;top:447.85999999999996px;font-size:5.5px;color:#000;">74829.916</div>
<div class="t" style="left:345px;top:447.85999999999996px;font-size:5.5px;color:#000;">2010.887</div>
<div class="t" style="left:382.5px;top:447.85999999999996px;font-size:5.5px;color:#000;">N/A</div>
<div class="t" style="left:418.4px;top:447.85999999999996px;font-size:5.5px;color:#000;">N/A</div>
<div class="t" style="left:455px;top:447.85999999999996px;font-size:5.5px;color:#000;">N/A</div>
<div class="t" style="left:491.7px;top:447.85999999999996px;font-size:5.5px;color:#000;">N/A</div>
<div style="position:absolute;left:274px;top:458.9199999999999px;width:243.5px;height:0.6px;background:#f0f0f0;"></div>
<div class="t" style="left:292px;top:454.13999999999993px;font-size:5.5px;color:#000;">A4</div>
<div class="t" style="left:308.6px;top:454.13999999999993px;font-size:5.5px;color:#000;">886.421</div>
<div class="t" style="left:345px;top:454.13999999999993px;font-size:5.5px;color:#000;">22.254</div>
<div class="t" style="left:382.5px;top:454.13999999999993px;font-size:5.5px;color:#000;">N/A</div>
<div class="t" style="left:418.4px;top:454.13999999999993px;font-size:5.5px;color:#000;">N/A</div>
<div class="t" style="left:455px;top:454.13999999999993px;font-size:5.5px;color:#000;">N/A</div>
<div class="t" style="left:491.7px;top:454.13999999999993px;font-size:5.5px;color:#000;">N/A</div>
<div style="position:absolute;left:274px;top:465.19999999999993px;width:243.5px;height:0.6px;background:#f0f0f0;"></div>
<div style="position:absolute;left:276.2px;top:461.12px;width:3.6px;height:3.8px;box-sizing:border-box;border:0.9px solid #555;border-radius:50%"></div>
<div class="t" style="left:292px;top:460.41999999999996px;font-size:5.5px;color:#000;">A5</div>
<div class="t" style="left:308.6px;top:460.41999999999996px;font-size:5.5px;color:#000;">0.000</div>
<div class="t" style="left:345px;top:460.41999999999996px;font-size:5.5px;color:#000;">0.000</div>
<div class="t" style="left:382.5px;top:460.41999999999996px;font-size:5.5px;color:#000;">N/A</div>
<div class="t" style="left:418.4px;top:460.41999999999996px;font-size:5.5px;color:#000;">N/A</div>
<div class="t" style="left:455px;top:460.41999999999996px;font-size:5.5px;color:#000;">N/A</div>
<div class="t" style="left:491.7px;top:460.41999999999996px;font-size:5.5px;color:#000;">N/A</div>
<div style="position:absolute;left:274px;top:471.4799999999999px;width:243.5px;height:0.6px;background:#f0f0f0;"></div>
<div style="position:absolute;left:276.2px;top:467.40px;width:3.6px;height:3.8px;box-sizing:border-box;border:0.9px solid #555;border-radius:50%"></div>
<div class="t" style="left:292px;top:466.69999999999993px;font-size:5.5px;color:#000;">A6</div>
<div class="t" style="left:308.6px;top:466.69999999999993px;font-size:5.5px;color:#000;">0.000</div>
<div class="t" style="left:345px;top:466.69999999999993px;font-size:5.5px;color:#000;">0.000</div>
<div class="t" style="left:382.5px;top:466.69999999999993px;font-size:5.5px;color:#000;">N/A</div>
<div class="t" style="left:418.4px;top:466.69999999999993px;font-size:5.5px;color:#000;">N/A</div>
<div class="t" style="left:455px;top:466.69999999999993px;font-size:5.5px;color:#000;">N/A</div>
<div class="t" style="left:491.7px;top:466.69999999999993px;font-size:5.5px;color:#000;">N/A</div>
<div style="position:absolute;left:274px;top:477.75999999999993px;width:243.5px;height:0.6px;background:#f0f0f0;"></div>
<div class="t" style="left:292px;top:472.97999999999996px;font-size:5.5px;color:#000;">A7</div>
<div class="t" style="left:308.6px;top:472.97999999999996px;font-size:5.5px;color:#000;">517.967</div>
<div class="t" style="left:345px;top:472.97999999999996px;font-size:5.5px;color:#000;">12.437</div>
<div class="t" style="left:382.5px;top:472.97999999999996px;font-size:5.5px;color:#000;">N/A</div>
<div class="t" style="left:418.4px;top:472.97999999999996px;font-size:5.5px;color:#000;">N/A</div>
<div class="t" style="left:455px;top:472.97999999999996px;font-size:5.5px;color:#000;">N/A</div>
<div class="t" style="left:491.7px;top:472.97999999999996px;font-size:5.5px;color:#000;">N/A</div>
<div style="position:absolute;left:274px;top:484.0399999999999px;width:243.5px;height:0.6px;background:#f0f0f0;"></div>
<div style="position:absolute;left:276.2px;top:479.96px;width:3.6px;height:3.8px;box-sizing:border-box;border:0.9px solid #555;border-radius:50%"></div>
<div class="t" style="left:292px;top:479.25999999999993px;font-size:5.5px;color:#000;">A8</div>
<div class="t" style="left:308.6px;top:479.25999999999993px;font-size:5.5px;color:#000;">0.000</div>
<div class="t" style="left:345px;top:479.25999999999993px;font-size:5.5px;color:#000;">0.000</div>
<div class="t" style="left:382.5px;top:479.25999999999993px;font-size:5.5px;color:#000;">N/A</div>
<div class="t" style="left:418.4px;top:479.25999999999993px;font-size:5.5px;color:#000;">N/A</div>
<div class="t" style="left:455px;top:479.25999999999993px;font-size:5.5px;color:#000;">N/A</div>
<div class="t" style="left:491.7px;top:479.25999999999993px;font-size:5.5px;color:#000;">N/A</div>
<div style="position:absolute;left:274px;top:490.31999999999994px;width:243.5px;height:0.6px;background:#f0f0f0;"></div>
<div style="position:absolute;left:276.2px;top:486.24px;width:3.6px;height:3.8px;box-sizing:border-box;border:0.9px solid #555;border-radius:50%"></div>
<div class="t" style="left:292px;top:485.53999999999996px;font-size:5.5px;color:#000;">A9</div>
<div class="t" style="left:308.6px;top:485.53999999999996px;font-size:5.5px;color:#000;">0.000</div>
<div class="t" style="left:345px;top:485.53999999999996px;font-size:5.5px;color:#000;">0.000</div>
<div class="t" style="left:382.5px;top:485.53999999999996px;font-size:5.5px;color:#000;">N/A</div>
<div class="t" style="left:418.4px;top:485.53999999999996px;font-size:5.5px;color:#000;">N/A</div>
<div class="t" style="left:455px;top:485.53999999999996px;font-size:5.5px;color:#000;">N/A</div>
<div class="t" style="left:491.7px;top:485.53999999999996px;font-size:5.5px;color:#000;">N/A</div>
<div style="position:absolute;left:274px;top:496.5999999999999px;width:243.5px;height:0.6px;background:#f0f0f0;"></div>
<div class="t" style="left:292px;top:491.81999999999994px;font-size:5.5px;color:#000;">A10</div>
<div class="t" style="left:308.6px;top:491.81999999999994px;font-size:5.5px;color:#000;">171.683</div>
<div class="t" style="left:345px;top:491.81999999999994px;font-size:5.5px;color:#000;">5.124</div>
<div class="t" style="left:382.5px;top:491.81999999999994px;font-size:5.5px;color:#000;">N/A</div>
<div class="t" style="left:418.4px;top:491.81999999999994px;font-size:5.5px;color:#000;">N/A</div>
<div class="t" style="left:455px;top:491.81999999999994px;font-size:5.5px;color:#000;">N/A</div>
<div class="t" style="left:491.7px;top:491.81999999999994px;font-size:5.5px;color:#000;">N/A</div>
<div style="position:absolute;left:274px;top:502.87999999999994px;width:243.5px;height:0.6px;background:#f0f0f0;"></div>
<div class="t" style="left:292px;top:498.09999999999997px;font-size:5.5px;color:#000;">A11</div>
<div class="t" style="left:308.6px;top:498.09999999999997px;font-size:5.5px;color:#000;">193.066</div>
<div class="t" style="left:345px;top:498.09999999999997px;font-size:5.5px;color:#000;">5.076</div>
<div class="t" style="left:382.5px;top:498.09999999999997px;font-size:5.5px;color:#000;">N/A</div>
<div class="t" style="left:418.4px;top:498.09999999999997px;font-size:5.5px;color:#000;">N/A</div>
<div class="t" style="left:455px;top:498.09999999999997px;font-size:5.5px;color:#000;">N/A</div>
<div class="t" style="left:491.7px;top:498.09999999999997px;font-size:5.5px;color:#000;">N/A</div>
<div style="position:absolute;left:274px;top:509.1599999999999px;width:243.5px;height:0.6px;background:#f0f0f0;"></div>
<div style="position:absolute;left:276.2px;top:505.08px;width:3.6px;height:3.8px;box-sizing:border-box;border:0.9px solid #555;border-radius:50%"></div>
<div class="t" style="left:292px;top:504.37999999999994px;font-size:5.5px;color:#000;">A12</div>
<div class="t" style="left:308.6px;top:504.37999999999994px;font-size:5.5px;color:#000;">0.000</div>
<div class="t" style="left:345px;top:504.37999999999994px;font-size:5.5px;color:#000;">0.000</div>
<div class="t" style="left:382.5px;top:504.37999999999994px;font-size:5.5px;color:#000;">N/A</div>
<div class="t" style="left:418.4px;top:504.37999999999994px;font-size:5.5px;color:#000;">N/A</div>
<div class="t" style="left:455px;top:504.37999999999994px;font-size:5.5px;color:#000;">N/A</div>
<div class="t" style="left:491.7px;top:504.37999999999994px;font-size:5.5px;color:#000;">N/A</div>
<div style="position:absolute;left:274px;top:515.4399999999999px;width:243.5px;height:0.6px;background:#f0f0f0;"></div>
<div style="position:absolute;left:276.2px;top:511.36px;width:3.6px;height:3.8px;box-sizing:border-box;border:0.9px solid #555;border-radius:50%"></div>
<div class="t" style="left:292px;top:510.65999999999997px;font-size:5.5px;color:#000;">A13</div>
<div class="t" style="left:308.6px;top:510.65999999999997px;font-size:5.5px;color:#000;">0.000</div>
<div class="t" style="left:345px;top:510.65999999999997px;font-size:5.5px;color:#000;">0.000</div>
<div class="t" style="left:382.5px;top:510.65999999999997px;font-size:5.5px;color:#000;">N/A</div>
<div class="t" style="left:418.4px;top:510.65999999999997px;font-size:5.5px;color:#000;">N/A</div>
<div class="t" style="left:455px;top:510.65999999999997px;font-size:5.5px;color:#000;">N/A</div>
<div class="t" style="left:491.7px;top:510.65999999999997px;font-size:5.5px;color:#000;">N/A</div>
<div style="position:absolute;left:274px;top:521.7199999999999px;width:243.5px;height:0.6px;background:#f0f0f0;"></div>
<div class="t" style="left:292px;top:516.9399999999999px;font-size:5.5px;color:#000;">A14</div>
<div class="t" style="left:308.6px;top:516.9399999999999px;font-size:5.5px;color:#000;">580.337</div>
<div class="t" style="left:345px;top:516.9399999999999px;font-size:5.5px;color:#000;">64.728</div>
<div class="t" style="left:382.5px;top:516.9399999999999px;font-size:5.5px;color:#000;">N/A</div>
<div class="t" style="left:418.4px;top:516.9399999999999px;font-size:5.5px;color:#000;">N/A</div>
<div class="t" style="left:455px;top:516.9399999999999px;font-size:5.5px;color:#000;">N/A</div>
<div class="t" style="left:491.7px;top:516.9399999999999px;font-size:5.5px;color:#000;">N/A</div>
<div style="position:absolute;left:274px;top:527.9999999999999px;width:243.5px;height:0.6px;background:#f0f0f0;"></div>
<div style="position:absolute;left:276.2px;top:523.92px;width:3.6px;height:3.8px;box-sizing:border-box;border:0.9px solid #555;border-radius:50%"></div>
<div class="t" style="left:292px;top:523.2199999999999px;font-size:5.5px;color:#000;">A15</div>
<div class="t" style="left:308.6px;top:523.2199999999999px;font-size:5.5px;color:#000;">0.000</div>
<div class="t" style="left:345px;top:523.2199999999999px;font-size:5.5px;color:#000;">0.000</div>
<div class="t" style="left:382.5px;top:523.2199999999999px;font-size:5.5px;color:#000;">N/A</div>
<div class="t" style="left:418.4px;top:523.2199999999999px;font-size:5.5px;color:#000;">N/A</div>
<div class="t" style="left:455px;top:523.2199999999999px;font-size:5.5px;color:#000;">N/A</div>
<div class="t" style="left:491.7px;top:523.2199999999999px;font-size:5.5px;color:#000;">N/A</div>
<div style="position:absolute;left:274px;top:534.28px;width:243.5px;height:0.6px;background:#f0f0f0;"></div>
<div class="t" style="left:292px;top:529.5px;font-size:5.5px;color:#000;">A16</div>
<div class="t" style="left:308.6px;top:529.5px;font-size:5.5px;color:#000;">3346.962</div>
<div class="t" style="left:345px;top:529.5px;font-size:5.5px;color:#000;">254.545</div>
<div class="t" style="left:382.5px;top:529.5px;font-size:5.5px;color:#000;">N/A</div>
<div class="t" style="left:418.4px;top:529.5px;font-size:5.5px;color:#000;">N/A</div>
<div class="t" style="left:455px;top:529.5px;font-size:5.5px;color:#000;">N/A</div>
<div class="t" style="left:491.7px;top:529.5px;font-size:5.5px;color:#000;">N/A</div>
<div style="position:absolute;left:274px;top:540.56px;width:243.5px;height:0.6px;background:#f0f0f0;"></div>
<div class="t" style="left:292px;top:535.78px;font-size:5.5px;color:#000;clip-path:inset(0 0 2.5px 0);">A17</div>
<div class="t" style="left:308.6px;top:535.78px;font-size:5.5px;color:#000;clip-path:inset(0 0 2.5px 0);">275.440</div>
<div class="t" style="left:345px;top:535.78px;font-size:5.5px;color:#000;clip-path:inset(0 0 2.5px 0);">22.765</div>
<div class="t" style="left:382.5px;top:535.78px;font-size:5.5px;color:#000;clip-path:inset(0 0 2.5px 0);">N/A</div>
<div class="t" style="left:418.4px;top:535.78px;font-size:5.5px;color:#000;clip-path:inset(0 0 2.5px 0);">N/A</div>
<div class="t" style="left:455px;top:535.78px;font-size:5.5px;color:#000;clip-path:inset(0 0 2.5px 0);">N/A</div>
<div class="t" style="left:491.7px;top:535.78px;font-size:5.5px;color:#000;clip-path:inset(0 0 2.5px 0);">N/A</div>
<div style="position:absolute;left:288px;top:433.8px;width:0.6px;height:100px;background:#f0f0f0;"></div>
<div style="position:absolute;left:305.6px;top:433.8px;width:0.6px;height:100px;background:#f0f0f0;"></div>
<div style="position:absolute;left:342.5px;top:433.8px;width:0.6px;height:100px;background:#f0f0f0;"></div>
<div style="position:absolute;left:379.5px;top:433.8px;width:0.6px;height:100px;background:#f0f0f0;"></div>
<div style="position:absolute;left:415.4px;top:433.8px;width:0.6px;height:100px;background:#f0f0f0;"></div>
<div style="position:absolute;left:452px;top:433.8px;width:0.6px;height:100px;background:#f0f0f0;"></div>
<div style="position:absolute;left:488.7px;top:433.8px;width:0.6px;height:100px;background:#f0f0f0;"></div>
<div style="position:absolute;left:518px;top:425.8px;width:7.5px;height:111px;background:#f8f8f6;"></div>
<div style="position:absolute;left:518.3px;top:426px;width:7px;height:12px;background:#c8d8f6;border-radius:1.5px;"><svg style="position:absolute;left:0;top:0" width="7" height="11"><path d="M1.8 6.5l1.7-1.8l1.7 1.8" fill="none" stroke="#2a3a80" stroke-width="1.1"/></svg></div>
<div style="position:absolute;left:518.5px;top:528.2px;width:7px;height:7.6px;background:#c8d8f6;border-radius:1.5px;"><svg style="position:absolute;left:0;top:0" width="7" height="8"><path d="M1.8 2.8l1.7 1.8l1.7-1.8" fill="none" stroke="#2a3a80" stroke-width="1.1"/></svg></div>
<div style="position:absolute;left:274px;top:537px;width:244px;height:7.2px;background:#f8f8f6;"></div>
<div style="position:absolute;left:273.8px;top:537.3px;width:7.8px;height:6.3px;background:#c8d8f6;border-radius:1.5px;"><svg style="position:absolute;left:0;top:0" width="8" height="7"><path d="M4.6 1.8l-1.8 1.7l1.8 1.7" fill="none" stroke="#2a3a80" stroke-width="1.1"/></svg></div>
<div style="position:absolute;left:283px;top:537.4px;width:219.6px;height:6.2px;background:#bccff2;border-radius:1.5px;"></div>
<div style="position:absolute;left:510.2px;top:537.3px;width:6.6px;height:6.3px;background:#c8d8f6;border-radius:1.5px;"><svg style="position:absolute;left:0;top:0" width="8" height="7"><path d="M2.6 1.8l1.8 1.7l-1.8 1.7" fill="none" stroke="#2a3a80" stroke-width="1.1"/></svg></div>
<div style="position:absolute;left:517.5px;top:537px;width:7.8px;height:7.5px;background:#ebe7da;"></div>
<div style="position:absolute;left:542.3px;top:428.6px;width:215.4px;height:115.4px;border:1px solid #d0d0bf;border-radius:2px;"></div>
<div style="position:absolute;left:545px;top:425px;width:66px;height:6px;background:#ebe4d3;"></div>
<div class="t" style="left:546px;top:425.6px;font-size:5.6px;color:#222;">Data Control [ 10060406 ]</div>
<div style="position:absolute;left:546.5px;top:434.8px;width:206px;height:13.5px;border:1px solid #d2cdbd;box-shadow:inset 1px 1px 0 #f8f6ee, 1px 1px 0 #f8f6ee;"></div>
<div class="t" style="left:548.5px;top:439.2px;font-size:5.5px;color:#222;">SampLine :</div>
<div style="position:absolute;left:585px;top:437px;width:66px;height:9.5px;background:#e8e5d4;border-top:1px solid #a8a498;border-left:1px solid #a8a498;border-bottom:1px solid #fff;border-right:1px solid #fff;"></div>
<div class="t" style="left:595px;top:439.4px;font-size:5.5px;color:#222;">00150(ms.ms)[16/86]</div>
<div style="position:absolute;left:655px;top:437.5px;width:7.5px;height:9.2px;background:#f2f0e8;border-top:1px solid #fff;border-left:1px solid #fff;border-right:1px solid #8a8678;border-bottom:1px solid #8a8678;"><div style="position:absolute;left:1.5px;top:2.5px;width:0;height:0;border-top:2px solid transparent;border-bottom:2px solid transparent;border-right:2.5px solid #000"></div></div>
<div style="position:absolute;left:662.5px;top:437.5px;width:40px;height:9.2px;background:#f6f5ee;"></div>
<div style="position:absolute;left:667.5px;top:437.5px;width:8.3px;height:9.2px;background:#f2f0e8;border-top:1px solid #fff;border-left:1px solid #fff;border-right:1px solid #8a8678;border-bottom:1px solid #8a8678;"></div>
<div style="position:absolute;left:695px;top:437.5px;width:7.5px;height:9.2px;background:#f2f0e8;border-top:1px solid #fff;border-left:1px solid #fff;border-right:1px solid #8a8678;border-bottom:1px solid #8a8678;"><div style="position:absolute;left:2px;top:2.5px;width:0;height:0;border-top:2px solid transparent;border-bottom:2px solid transparent;border-left:2.5px solid #000"></div></div>
<div style="position:absolute;left:704px;top:437.5px;width:8.5px;height:9.2px;background:#f4f2ea;"><div style="position:absolute;left:1px;top:0.5px;width:0;height:0;border-top:4px solid transparent;border-bottom:4px solid transparent;border-left:7px solid #e02020"></div></div>
<div style="position:absolute;left:714px;top:437.5px;width:8.5px;height:9.2px;background:#111;border:1px solid #ccc;"></div>
<div style="position:absolute;left:724px;top:437.5px;width:9px;height:9.2px;background:#e8e8f0;"><div style="position:absolute;left:1px;top:1px;width:7px;height:7px;border-radius:50%;background:#4a5a9a"></div></div>
<div style="position:absolute;left:546.5px;top:451px;width:166px;height:21.5px;border:1px solid #d2cdbd;box-shadow:inset 1px 1px 0 #f8f6ee, 1px 1px 0 #f8f6ee;"></div>
<div class="t" style="left:548.5px;top:455.5px;font-size:5.5px;color:#222;">Select Well :</div>
<div style="position:absolute;left:585px;top:453.6px;width:18px;height:16.3px;background:#fbfaf6;border:1px solid #8a8678;border-right-color:#fff;border-bottom-color:#fff;"></div>
<div style="position:absolute;left:589.0px;top:456.8px;width:2.4px;height:2.2px;background:#e070c0"></div>
<div style="position:absolute;left:591.6px;top:456.8px;width:2.4px;height:2.2px;background:#111"></div>
<div style="position:absolute;left:594.2px;top:456.8px;width:2.4px;height:2.2px;background:#111"></div>
<div style="position:absolute;left:596.8px;top:456.8px;width:2.4px;height:2.2px;background:#111"></div>
<div style="position:absolute;left:589.0px;top:459.2px;width:2.4px;height:2.2px;background:#111"></div>
<div style="position:absolute;left:591.6px;top:459.2px;width:2.4px;height:2.2px;background:#e070c0"></div>
<div style="position:absolute;left:594.2px;top:459.2px;width:2.4px;height:2.2px;background:#111"></div>
<div style="position:absolute;left:596.8px;top:459.2px;width:2.4px;height:2.2px;background:#111"></div>
<div style="position:absolute;left:589.0px;top:461.6px;width:2.4px;height:2.2px;background:#e070c0"></div>
<div style="position:absolute;left:591.6px;top:461.6px;width:2.4px;height:2.2px;background:#111"></div>
<div style="position:absolute;left:594.2px;top:461.6px;width:2.4px;height:2.2px;background:#e070c0"></div>
<div style="position:absolute;left:596.8px;top:461.6px;width:2.4px;height:2.2px;background:#111"></div>
<div style="position:absolute;left:589.0px;top:464.0px;width:2.4px;height:2.2px;background:#111"></div>
<div style="position:absolute;left:591.6px;top:464.0px;width:2.4px;height:2.2px;background:#e070c0"></div>
<div style="position:absolute;left:594.2px;top:464.0px;width:2.4px;height:2.2px;background:#111"></div>
<div style="position:absolute;left:596.8px;top:464.0px;width:2.4px;height:2.2px;background:#111"></div>
<div style="position:absolute;left:605px;top:453.6px;width:17.5px;height:16.3px;background:#f2f0e8;border-top:1px solid #fff;border-left:1px solid #fff;border-right:1px solid #8a8678;border-bottom:1px solid #8a8678;"></div>
<div style="position:absolute;left:609.0px;top:456.8px;width:2.4px;height:2.2px;background:#30a060"></div>
<div style="position:absolute;left:611.6px;top:456.8px;width:2.4px;height:2.2px;background:#111"></div>
<div style="position:absolute;left:614.2px;top:456.8px;width:2.4px;height:2.2px;background:#111"></div>
<div style="position:absolute;left:616.8px;top:456.8px;width:2.4px;height:2.2px;background:#111"></div>
<div style="position:absolute;left:609.0px;top:459.2px;width:2.4px;height:2.2px;background:#111"></div>
<div style="position:absolute;left:611.6px;top:459.2px;width:2.4px;height:2.2px;background:#30a060"></div>
<div style="position:absolute;left:614.2px;top:459.2px;width:2.4px;height:2.2px;background:#111"></div>
<div style="position:absolute;left:616.8px;top:459.2px;width:2.4px;height:2.2px;background:#111"></div>
<div style="position:absolute;left:609.0px;top:461.6px;width:2.4px;height:2.2px;background:#e8e040"></div>
<div style="position:absolute;left:611.6px;top:461.6px;width:2.4px;height:2.2px;background:#111"></div>
<div style="position:absolute;left:614.2px;top:461.6px;width:2.4px;height:2.2px;background:#40b8e0"></div>
<div style="position:absolute;left:616.8px;top:461.6px;width:2.4px;height:2.2px;background:#111"></div>
<div style="position:absolute;left:609.0px;top:464.0px;width:2.4px;height:2.2px;background:#111"></div>
<div style="position:absolute;left:611.6px;top:464.0px;width:2.4px;height:2.2px;background:#e8e040"></div>
<div style="position:absolute;left:614.2px;top:464.0px;width:2.4px;height:2.2px;background:#111"></div>
<div style="position:absolute;left:616.8px;top:464.0px;width:2.4px;height:2.2px;background:#40b8e0"></div>
<div style="position:absolute;left:625px;top:453.6px;width:17.5px;height:16.3px;background:#f2f0e8;border-top:1px solid #fff;border-left:1px solid #fff;border-right:1px solid #8a8678;border-bottom:1px solid #8a8678;"></div>
<div style="position:absolute;left:629.0px;top:456.8px;width:2.4px;height:2.2px;background:#e04040"></div>
<div style="position:absolute;left:631.6px;top:456.8px;width:2.4px;height:2.2px;background:#111"></div>
<div style="position:absolute;left:634.2px;top:456.8px;width:2.4px;height:2.2px;background:#111"></div>
<div style="position:absolute;left:636.8px;top:456.8px;width:2.4px;height:2.2px;background:#111"></div>
<div style="position:absolute;left:629.0px;top:459.2px;width:2.4px;height:2.2px;background:#111"></div>
<div style="position:absolute;left:631.6px;top:459.2px;width:2.4px;height:2.2px;background:#e04040"></div>
<div style="position:absolute;left:634.2px;top:459.2px;width:2.4px;height:2.2px;background:#111"></div>
<div style="position:absolute;left:636.8px;top:459.2px;width:2.4px;height:2.2px;background:#111"></div>
<div style="position:absolute;left:629.0px;top:461.6px;width:2.4px;height:2.2px;background:#2060b0"></div>
<div style="position:absolute;left:631.6px;top:461.6px;width:2.4px;height:2.2px;background:#2060b0"></div>
<div style="position:absolute;left:634.2px;top:461.6px;width:2.4px;height:2.2px;background:#2060b0"></div>
<div style="position:absolute;left:636.8px;top:461.6px;width:2.4px;height:2.2px;background:#2060b0"></div>
<div style="position:absolute;left:629.0px;top:464.0px;width:2.4px;height:2.2px;background:#2060b0"></div>
<div style="position:absolute;left:631.6px;top:464.0px;width:2.4px;height:2.2px;background:#2060b0"></div>
<div style="position:absolute;left:634.2px;top:464.0px;width:2.4px;height:2.2px;background:#2060b0"></div>
<div style="position:absolute;left:636.8px;top:464.0px;width:2.4px;height:2.2px;background:#2060b0"></div>
<div style="position:absolute;left:643.8px;top:454.5px;width:18.9px;height:7.3px;background:#f2f0e8;border-top:1px solid #fff;border-left:1px solid #fff;border-right:1px solid #8a8678;border-bottom:1px solid #8a8678;"><div class="t" style="left:0;top:0.3px;width:17px;text-align:center;font:bold 6.8px Liberation Sans;color:#0a7a3a">N.C.</div></div>
<div style="position:absolute;left:643.8px;top:462.8px;width:18.9px;height:7.3px;background:#f2f0e8;border-top:1px solid #fff;border-left:1px solid #fff;border-right:1px solid #8a8678;border-bottom:1px solid #8a8678;"><div class="t" style="left:0;top:0.3px;width:17px;text-align:center;font:bold 6.8px Liberation Sans;color:#0a2070">P.C.</div></div>
<div style="position:absolute;left:667.5px;top:454px;width:46px;height:15.7px;background:#f2f0e8;border-top:1px solid #fff;border-left:1px solid #fff;border-right:1px solid #8a8678;border-bottom:1px solid #8a8678;"><div class="t" style="left:1.5px;top:4.6px;font-size:5.3px;color:#222">Hit &amp; Calc.Param.</div></div>
<div style="position:absolute;left:716px;top:451.7px;width:36.5px;height:20.8px;border:1px solid #d2cdbd;box-shadow:inset 1px 1px 0 #f8f6ee, 1px 1px 0 #f8f6ee;"></div>
<div style="position:absolute;left:719.7px;top:457.5px;width:5.5px;height:5.8px;border-left:1px solid #555;border-top:1px solid #555;background:#fff;"></div>
<div class="t" style="left:728px;top:458px;font-size:5.5px;color:#222;">Diagram</div>
<div style="position:absolute;left:546.4px;top:475.5px;width:134.4px;height:42.8px;border:1px solid #d2cdbd;box-shadow:inset 1px 1px 0 #f8f6ee, 1px 1px 0 #f8f6ee;"></div>
<div class="t" style="left:548.5px;top:479.8px;font-size:5.5px;color:#222;">Select Graph :</div>
<div style="position:absolute;left:585.2px;top:483.7px;width:5px;height:5px;border-left:1px solid #777;border-top:1px solid #777;background:#f8f8f4;"></div>
<div class="t" style="left:593.8px;top:483.4px;font-size:5.5px;line-height:5.5px;color:#b8b4a8">Ratio</div>
<div style="position:absolute;left:585.2px;top:491.5px;width:5px;height:5px;border-left:1px solid #777;border-top:1px solid #777;background:#f8f8f4;"></div>
<div class="t" style="left:593.8px;top:491.2px;font-size:5.5px;line-height:5.5px;background:#1e8a34;color:#58b060;padding:0 1.2px;width:12.3px">Lumi</div>
<div style="position:absolute;left:585.2px;top:500.6px;width:5px;height:5px;border-left:1px solid #777;border-top:1px solid #777;background:#f8f8f4;"></div>
<div class="t" style="left:593.8px;top:500.3px;font-size:5.5px;line-height:5.5px;color:#b8b4a8">Lumi1stSamp</div>
<div style="position:absolute;left:585.2px;top:510.2px;width:5px;height:5px;border-left:1px solid #777;border-top:1px solid #777;background:#f8f8f4;"></div>
<div class="t" style="left:593.8px;top:509.9px;font-size:5.5px;line-height:5.5px;background:#3ab4d8;color:#10305a;padding:0 0.3px;width:26px;overflow:hidden">Integ.Ratio</div>
<svg style="position:absolute;left:585.2px;top:491.5px" width="6" height="6"><path d="M1.2 2.8l1.4 1.6l2.6-3.4" fill="none" stroke="#000" stroke-width="1.1"/></svg>
<div style="position:absolute;left:658px;top:480.5px;width:17.7px;height:15.7px;background:#f2f0e8;border-top:1px solid #fff;border-left:1px solid #fff;border-right:1px solid #8a8678;border-bottom:1px solid #8a8678;"><svg style="position:absolute;left:-1px;top:-1px" width="17.7" height="15.7" viewBox="0 0 17.7 15.7"><path d="M3 2.5h5.5v10h-5.5z" fill="#3a1a18"/><path d="M9.5 2.5h5.5v10h-5.5z" fill="#111"/><path d="M4 4l1 3l1-2l1 4M10 4l1 4l1-3" stroke="#c04040" stroke-width=".8" fill="none"/><path d="M6 8.5q3-3 6-1" stroke="#2aa870" stroke-width="1.6" fill="none"/></svg></div>
<div style="position:absolute;left:658px;top:500px;width:17.7px;height:15px;background:#f2f0e8;border-top:1px solid #fff;border-left:1px solid #fff;border-right:1px solid #8a8678;border-bottom:1px solid #8a8678;"><svg style="position:absolute;left:-1px;top:-1px" width="17.7" height="15" viewBox="0 0 17.7 15"><path d="M3 2.5h6v7h-6z" fill="#151515"/><path d="M4 8l2-4l2 3" stroke="#c04040" stroke-width=".8" fill="none"/><path d="M7 10q2-2 4 0t3 1" stroke="#2aa870" stroke-width="1.8" fill="none"/><path d="M13 9l2 4" stroke="#d8c060" stroke-width=".9"/></svg></div>
<div style="position:absolute;left:682px;top:475.7px;width:70.3px;height:42.5px;border:1px solid #d2cdbd;box-shadow:inset 1px 1px 0 #f8f6ee, 1px 1px 0 #f8f6ee;"></div>
<div class="t" style="left:684px;top:479.8px;font-size:5.5px;color:#222;">Processing :</div>
<div style="position:absolute;left:719.4px;top:478.1px;width:27.4px;height:9.6px;background:#8a8a88;border:1px solid #4a4a48;box-shadow:inset 1.2px 0 0 #d8d8d4, inset -1.2px 0 0 #e8e8e4;"><div class="t" style="left:0;top:0.9px;width:25.4px;text-align:center;font-weight:bold;font-size:7.5px;line-height:7.5px;color:#1a8a7a">S.U.</div></div>
<div style="position:absolute;left:719.4px;top:487.6px;width:27.4px;height:9.6px;background:#8a8a88;border:1px solid #4a4a48;box-shadow:inset 1.2px 0 0 #d8d8d4, inset -1.2px 0 0 #e8e8e4;"><div class="t" style="left:0;top:0.9px;width:25.4px;text-align:center;font-weight:bold;font-size:7.5px;line-height:7.5px;color:#1a8a7a">N.C.</div></div>
<div style="position:absolute;left:719.4px;top:497.1px;width:27.4px;height:9.6px;background:#8a8a88;border:1px solid #4a4a48;box-shadow:inset 1.2px 0 0 #d8d8d4, inset -1.2px 0 0 #e8e8e4;"><div class="t" style="left:0;top:0.9px;width:25.4px;text-align:center;font-weight:bold;font-size:7.5px;line-height:7.5px;color:#1a8a7a">S.B.</div></div>
<div style="position:absolute;left:719.4px;top:506.6px;width:27.4px;height:9.6px;background:#8a8a88;border:1px solid #4a4a48;box-shadow:inset 1.2px 0 0 #d8d8d4, inset -1.2px 0 0 #e8e8e4;"><div class="t" style="left:0;top:0.9px;width:25.4px;text-align:center;font-weight:bold;font-size:7.5px;line-height:7.5px;color:#1a8a7a">P.C.</div></div>
<div style="position:absolute;left:688px;top:499.3px;width:17px;height:14.7px;background:#f2f0e8;border-top:1px solid #fff;border-left:1px solid #fff;border-right:1px solid #8a8678;border-bottom:1px solid #8a8678;"><div class="t" style="left:1.5px;top:5px;font-size:5.5px;color:#222">Setup</div></div>
<div style="position:absolute;left:546px;top:521px;width:40px;height:21px;border:1px solid #d2cdbd;box-shadow:inset 1px 1px 0 #f8f6ee, 1px 1px 0 #f8f6ee;"></div>
<div class="t" style="left:549px;top:525.2px;font-size:5.5px;color:#222;">Info :</div>
<div style="position:absolute;left:565.7px;top:525px;width:18.7px;height:15.8px;background:#f2f0e8;border-top:1px solid #fff;border-left:1px solid #fff;border-right:1px solid #8a8678;border-bottom:1px solid #8a8678;"><svg style="position:absolute;left:-1px;top:-1px" width="18.7" height="15.8" viewBox="0 0 18.7 15.8"><path d="M5 6q0-3 5-3t5 3t-5 3l-2 2v-2q-3-.5-3-3z" fill="#fff" stroke="#666" stroke-width=".9"/><text x="3.8" y="14.3" font-family="Liberation Sans" font-weight="bold" font-size="6.2" fill="#d01e28">Info</text></svg></div>
<div style="position:absolute;left:588.4px;top:521px;width:39px;height:21px;border:1px solid #d2cdbd;box-shadow:inset 1px 1px 0 #f8f6ee, 1px 1px 0 #f8f6ee;"></div>
<div class="t" style="left:590.5px;top:525.2px;font-size:5.5px;color:#222;">Text :</div>
<div style="position:absolute;left:607.3px;top:525px;width:18.6px;height:15.8px;background:#f2f0e8;border-top:1px solid #fff;border-left:1px solid #fff;border-right:1px solid #8a8678;border-bottom:1px solid #8a8678;"><svg style="position:absolute;left:-1px;top:-1px" width="18.6" height="15.8" viewBox="0 0 18.6 15.8"><path d="M4.5 3h9v9.5h-9z" fill="#1a1a1a"/><path d="M6.5 3.8h5v3.2h-5z" fill="#e8e8e8"/><path d="M7 8.5h2.5v3.5h-2.5z" fill="#e8e8e8"/></svg></div>
<div style="position:absolute;left:629.8px;top:521px;width:38.6px;height:21px;border:1px solid #d2cdbd;box-shadow:inset 1px 1px 0 #f8f6ee, 1px 1px 0 #f8f6ee;"></div>
<div class="t" style="left:632px;top:525.2px;font-size:5.5px;color:#222;">Print :</div>
<div style="position:absolute;left:648px;top:525px;width:18.7px;height:15.8px;background:#f2f0e8;border-top:1px solid #fff;border-left:1px solid #fff;border-right:1px solid #8a8678;border-bottom:1px solid #8a8678;"><svg style="position:absolute;left:-1px;top:-1px" width="18.7" height="15.8" viewBox="0 0 18.7 15.8"><path d="M4 8.5q0-3 3-3.5h4q3 .5 3 3.5v2.5q0 2-2 2h-6q-2 0-2-2z" fill="#6a6a6a" stroke="#2a2a2a" stroke-width="1"/><path d="M6.5 2.5h5v3h-5z" fill="#fff" stroke="#333" stroke-width=".8"/><path d="M5 9.5h8" stroke="#e8e8e8" stroke-width="1.2"/></svg></div>
<div style="position:absolute;left:670.7px;top:521px;width:81.5px;height:21px;border:1px solid #d2cdbd;box-shadow:inset 1px 1px 0 #f8f6ee, 1px 1px 0 #f8f6ee;"></div>
<div class="t" style="left:672px;top:525.2px;font-size:5.5px;color:#222;">Scale :</div>
<div style="position:absolute;left:691.9px;top:525.2px;width:18.2px;height:15.3px;background:#f2f0e8;border-top:1px solid #fff;border-left:1px solid #fff;border-right:1px solid #8a8678;border-bottom:1px solid #8a8678;"><svg style="position:absolute;left:-1px;top:-1px" width="18.2" height="15.3" viewBox="0 0 18.2 15.3"><path d="M3 5.5h4.5M3 10h4.5M7.5 4v8" fill="none" stroke="#333" stroke-width="1.1"/><path d="M9 4.5h3v2" fill="none" stroke="#888" stroke-width="1"/><path d="M8.5 14.5l3.5-8.5l3.5 8.5z" fill="#d81e28"/></svg></div>
<div style="position:absolute;left:711.6px;top:525.2px;width:18.2px;height:15.3px;background:#f2f0e8;border-top:1px solid #fff;border-left:1px solid #fff;border-right:1px solid #8a8678;border-bottom:1px solid #8a8678;"><svg style="position:absolute;left:-1px;top:-1px" width="18.2" height="15.3" viewBox="0 0 18.2 15.3"><path d="M3 5.5h4.5M3 10h4.5M7.5 4v8" fill="none" stroke="#333" stroke-width="1.1"/><path d="M9 4.5h3v2" fill="none" stroke="#888" stroke-width="1"/><path d="M8.5 14.5v-8h2l1.5 4l1.5-4h2v8h-1.8v-4.5l-1.2 3.5h-1l-1.2-3.5v4.5z" fill="#d81e28"/></svg></div>
<div style="position:absolute;left:731.2px;top:525.2px;width:18.2px;height:15.3px;background:#f2f0e8;border-top:1px solid #fff;border-left:1px solid #fff;border-right:1px solid #8a8678;border-bottom:1px solid #8a8678;"><svg style="position:absolute;left:-1px;top:-1px" width="18.2" height="15.3" viewBox="0 0 18.2 15.3"><path d="M3 5.5h4.5M3 10h4.5M7.5 4v8" fill="none" stroke="#333" stroke-width="1.1"/><path d="M9 4.5h3v2" fill="none" stroke="#888" stroke-width="1"/><text x="9" y="14.5" font-family="Liberation Sans" font-weight="bold" font-size="9" fill="#d81e28">S</text></svg></div>
<div class="t" style="left:4px;top:552.6px;font-size:5.5px;color:#222;">Ready</div>
<div style="position:absolute;left:317.4px;top:550.6px;width:195.00000000000003px;height:8.2px;border-top:1px solid #c4c0b0;border-left:1px solid #c4c0b0;border-bottom:1px solid #faf8f0;border-right:1px solid #faf8f0;"></div>
<div style="position:absolute;left:513px;top:550.6px;width:195.10000000000005px;height:8.2px;border-top:1px solid #c4c0b0;border-left:1px solid #c4c0b0;border-bottom:1px solid #faf8f0;border-right:1px solid #faf8f0;"></div>
<div style="position:absolute;left:708.7px;top:550.6px;width:10.699999999999955px;height:8.2px;border-top:1px solid #c4c0b0;border-left:1px solid #c4c0b0;border-bottom:1px solid #faf8f0;border-right:1px solid #faf8f0;"></div>
<div style="position:absolute;left:720px;top:550.6px;width:14.4px;height:8.2px;border-top:1px solid #c4c0b0;border-left:1px solid #c4c0b0;border-bottom:1px solid #faf8f0;border-right:1px solid #faf8f0;"></div>
<div style="position:absolute;left:735px;top:550.6px;width:15.100000000000046px;height:8.2px;border-top:1px solid #c4c0b0;border-left:1px solid #c4c0b0;border-bottom:1px solid #faf8f0;border-right:1px solid #faf8f0;"></div>
<div style="position:absolute;left:750.7px;top:550.6px;width:17.699999999999953px;height:8.2px;border-top:1px solid #c4c0b0;border-left:1px solid #c4c0b0;border-bottom:1px solid #faf8f0;border-right:1px solid #faf8f0;"></div>
<div class="t" style="left:738.5px;top:552.4px;font-size:5.5px;color:#222;">NUM</div>
<div style="position:absolute;left:2.2px;top:585.4px;width:2.6px;height:2.6px;background:#7a7a7a;border-radius:50%;"></div>
<div class="t" style="left:19.3px;top:575.5px;font-size:20.5px;color:#767676;letter-spacing:-0.07px;">Cell: Aeg-CHO (8000 cells/well)</div>
<div style="position:absolute;left:2.2px;top:611.0px;width:2.6px;height:2.6px;background:#7a7a7a;border-radius:50%;"></div>
<div class="t" style="left:19.3px;top:601.4px;font-size:20.5px;color:#767676;letter-spacing:-0.09px;">Substrate: coelenterazine</div>
<div style="position:absolute;left:2.2px;top:636.6px;width:2.6px;height:2.6px;background:#7a7a7a;border-radius:50%;"></div>
<div class="t" style="left:19.3px;top:627.3px;font-size:20.5px;color:#767676;letter-spacing:0.16px;">Ligand: ATP (500 nM, 100 nM, 20 nM)</div>
</body></html>
